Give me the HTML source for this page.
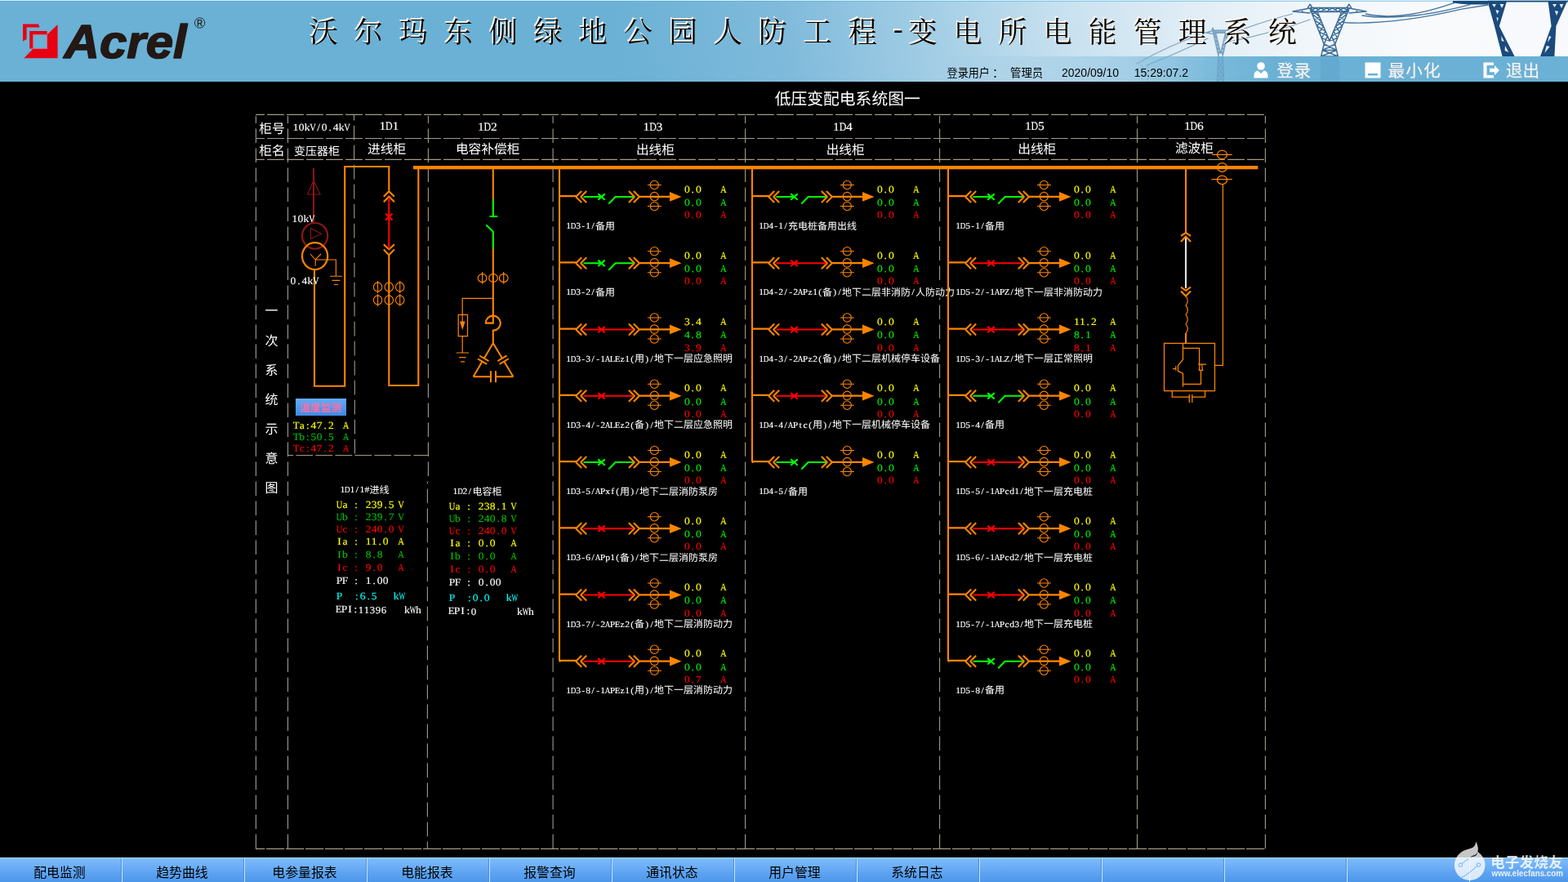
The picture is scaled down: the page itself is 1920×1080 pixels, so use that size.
<!DOCTYPE html>
<html lang="zh"><head><meta charset="utf-8"><title>沃尔玛东侧绿地公园人防工程-变电所电能管理系统</title><style>
html,body{margin:0;padding:0;background:#000}
body{position:relative;width:1920px;height:1080px;overflow:hidden;font-family:"Liberation Sans",sans-serif}
#hd{position:absolute;left:0;top:0;width:1920px;height:100px;background:linear-gradient(80deg,#6AB1D5 0,#6AB1D5 39%,#7FBADB 50%,#A5CFE6 60%,#C8E1F0 68%,#E0EDF6 76%,#F0F6FA 83%,#F8FAFC 90%,#F7F9FC 100%)}
#dg,#hd svg,#ft svg{will-change:transform}
#dg{position:absolute;left:0;top:0}
#dg text{font-family:"Liberation Serif","Noto Sans CJK SC",serif;stroke-width:.12px;text-rendering:geometricPrecision}
#ft{position:absolute;left:0;top:1050px;width:1920px;height:30px;background:#5CA3F0}
.fb{position:absolute;top:0;height:30px;background:linear-gradient(180deg,#7EBBFB 0,#6FB0F7 30%,#5CA2F1 65%,#4D97EA 100%);border-top:1px solid #A8E4FF;border-right:1px solid #C4E6FF;box-sizing:content-box;height:29px;box-shadow:inset -1px 0 0 #4A8FDE}
.cj{font-family:"Liberation Sans","Noto Sans CJK SC",sans-serif}
.ts{font-family:"Liberation Serif","Noto Serif CJK SC",serif}
</style></head>
<body>
<div id="hd"><svg width="1920" height="100" viewBox="0 0 1920 100" style="position:absolute;left:0;top:0" font-family="'Liberation Sans',sans-serif"><defs><linearGradient id="band" x1="0" x2="1"><stop offset="0" stop-color="#6AB1D5" stop-opacity="0"/><stop offset="0.12" stop-color="#6AB1D5" stop-opacity="0.1"/><stop offset="0.30" stop-color="#6AB1D5" stop-opacity="0.45"/><stop offset="0.43" stop-color="#6AB1D5" stop-opacity="0.85"/><stop offset="0.53" stop-color="#6AB1D5" stop-opacity="1"/><stop offset="1" stop-color="#6AB1D5"/></linearGradient></defs><rect x="0" y="0" width="1920" height="1" fill="#CDF3FF"/><rect x="0" y="1" width="1920" height="1" fill="#5FA8D0" opacity="0.55"/><g fill="none" stroke-linecap="round"><path d="M1582.5 17Q1540 28 1512 40M1604 24Q1560 40 1500 52M1476 40Q1430 56 1392 78M1479 47Q1440 66 1404 80" stroke="#6F97B7" stroke-width="1.2" opacity="0.85"/><path d="M1672.5 17Q1715 26.6 1781 3.4M1645 27.6Q1705 31 1790 11.2L1822 6M1668 19Q1720 27 1800 5.6" stroke="#44749E" stroke-width="1.3"/></g><path d="M1483.92 37.06L1485.06 34L1486.2 37.06M1486.01 37.06L1476.6 40.12L1485.06 41.48M1481.24 38.08L1481.24 41.14M1484.87 37.06L1491.9 68M1488.69 40.46L1494.6 65.28M1484.87 37.06L1489.67 44.6M1488.69 40.46L1486.04 42.22M1486.04 42.22L1490.66 48.73M1489.67 44.6L1487.21 47.37M1487.21 47.37L1491.64 52.87M1490.66 48.73L1488.38 52.53M1488.38 52.53L1492.63 57.01M1491.64 52.87L1489.56 57.69M1489.56 57.69L1493.61 61.14M1492.63 57.01L1490.73 62.84M1490.73 62.84L1494.6 65.28M1493.61 61.14L1491.9 68M1505.28 37.06L1504.14 34L1503 37.06M1503.19 37.06L1512.6 40.12L1504.14 41.48M1507.96 38.08L1507.96 41.14M1504.33 37.06L1497.3 68M1500.51 40.46L1494.6 65.28M1504.33 37.06L1499.53 44.6M1500.51 40.46L1503.16 42.22M1503.16 42.22L1498.54 48.73M1499.53 44.6L1501.99 47.37M1501.99 47.37L1497.56 52.87M1498.54 48.73L1500.82 52.53M1500.82 52.53L1496.57 57.01M1497.56 52.87L1499.64 57.69M1499.64 57.69L1495.59 61.14M1496.57 57.01L1498.47 62.84M1498.47 62.84L1494.6 65.28M1495.59 61.14L1497.3 68M1485.06 37.06L1504.14 37.06M1485.06 40.46L1504.14 40.46M1485.06 37.06L1487.79 40.46M1485.06 40.46L1487.79 37.06M1487.79 37.06L1490.51 40.46M1487.79 40.46L1490.51 37.06M1490.51 37.06L1493.24 40.46M1490.51 40.46L1493.24 37.06M1493.24 37.06L1495.96 40.46M1493.24 40.46L1495.96 37.06M1495.96 37.06L1498.69 40.46M1495.96 40.46L1498.69 37.06M1498.69 37.06L1501.41 40.46M1498.69 40.46L1501.41 37.06M1501.41 37.06L1504.14 40.46M1501.41 40.46L1504.14 37.06" stroke="#8AAAC2" stroke-width="1.3" fill="none" opacity="0.85" stroke-linejoin="round"/><path d="M1601.29 9.59L1604.15 5.2L1607.01 9.59M1606.54 9.59L1583 13.98L1604.15 15.94M1594.61 11.06L1594.61 15.45M1603.67 9.59L1621.25 54M1613.21 14.47L1628 50.1M1603.67 9.59L1615.68 20.41M1613.21 14.47L1606.6 16.99M1606.6 16.99L1618.14 26.35M1615.68 20.41L1609.53 24.39M1609.53 24.39L1620.61 32.28M1618.14 26.35L1612.46 31.8M1612.46 31.8L1623.07 38.22M1620.61 32.28L1615.39 39.2M1615.39 39.2L1625.54 44.16M1623.07 38.22L1618.32 46.6M1618.32 46.6L1628 50.1M1625.54 44.16L1621.25 54M1654.71 9.59L1651.85 5.2L1648.99 9.59M1649.46 9.59L1673 13.98L1651.85 15.94M1661.39 11.06L1661.39 15.45M1652.33 9.59L1634.75 54M1642.79 14.47L1628 50.1M1652.33 9.59L1640.32 20.41M1642.79 14.47L1649.4 16.99M1649.4 16.99L1637.86 26.35M1640.32 20.41L1646.47 24.39M1646.47 24.39L1635.39 32.28M1637.86 26.35L1643.54 31.8M1643.54 31.8L1632.93 38.22M1635.39 32.28L1640.61 39.2M1640.61 39.2L1630.46 44.16M1632.93 38.22L1637.68 46.6M1637.68 46.6L1628 50.1M1630.46 44.16L1634.75 54M1604.15 9.59L1651.85 9.59M1604.15 14.47L1651.85 14.47M1604.15 9.59L1610.96 14.47M1604.15 14.47L1610.96 9.59M1610.96 9.59L1617.78 14.47M1610.96 14.47L1617.78 9.59M1617.78 9.59L1624.59 14.47M1617.78 14.47L1624.59 9.59M1624.59 9.59L1631.41 14.47M1624.59 14.47L1631.41 9.59M1631.41 9.59L1638.22 14.47M1631.41 14.47L1638.22 9.59M1638.22 9.59L1645.04 14.47M1638.22 14.47L1645.04 9.59M1645.04 9.59L1651.85 14.47M1645.04 14.47L1651.85 9.59M1621.25 54L1617.65 69M1634.75 54L1638.35 69M1621.25 54L1636.55 61.5M1634.75 54L1619.45 61.5M1619.45 61.5L1636.55 61.5M1619.45 61.5L1638.35 69M1636.55 61.5L1617.65 69M1617.65 69L1638.35 69" stroke="#3D6D98" stroke-width="1.5" fill="none" opacity="1" stroke-linejoin="round"/><path d="M1779 1H1822V5.4H1800Q1788 5 1779 3.6Z" fill="#1B4A7C"/><path d="M1822 1.6H1920" stroke="#1B4A7C" stroke-width="1.6"/><path d="M1821.5 1.5H1845L1835.8 32L1854.6 69H1839.6L1830 32Z" fill="#1B4A7C"/><path d="M1895.6 1.5H1919L1905.4 32L1903.4 69H1886L1899.6 32Z" fill="#1B4A7C"/><g fill="#E4ECF4"><path d="M1827 5H1832L1829.8 9ZM1836.5 5H1841.5L1839 10ZM1831.4 12L1835.6 13.2L1833.4 17.6ZM1832.4 21L1834.8 22L1833.6 26.4ZM1838.4 44L1842 51L1838.6 50ZM1843 56L1847.4 64L1842.6 62ZM1901 5H1906L1903.6 9ZM1909.6 5H1914.4L1912 10ZM1903.8 13L1908.2 14L1906 19ZM1896.8 44L1899.6 45L1895 52ZM1893.6 56L1897.6 57L1891.4 65Z"/></g><rect x="1150" y="69" width="770" height="31" fill="url(#band)"/><rect x="1617" y="69" width="23" height="31" fill="#3F7FAE" opacity="0.13"/><path clip-path="inset(0)" d="M1483.92 37.06L1485.06 34L1486.2 37.06M1486.01 37.06L1476.6 40.12L1485.06 41.48M1481.24 38.08L1481.24 41.14M1484.87 37.06L1491.9 68M1488.69 40.46L1494.6 65.28M1484.87 37.06L1489.67 44.6M1488.69 40.46L1486.04 42.22M1486.04 42.22L1490.66 48.73M1489.67 44.6L1487.21 47.37M1487.21 47.37L1491.64 52.87M1490.66 48.73L1488.38 52.53M1488.38 52.53L1492.63 57.01M1491.64 52.87L1489.56 57.69M1489.56 57.69L1493.61 61.14M1492.63 57.01L1490.73 62.84M1490.73 62.84L1494.6 65.28M1493.61 61.14L1491.9 68M1505.28 37.06L1504.14 34L1503 37.06M1503.19 37.06L1512.6 40.12L1504.14 41.48M1507.96 38.08L1507.96 41.14M1504.33 37.06L1497.3 68M1500.51 40.46L1494.6 65.28M1504.33 37.06L1499.53 44.6M1500.51 40.46L1503.16 42.22M1503.16 42.22L1498.54 48.73M1499.53 44.6L1501.99 47.37M1501.99 47.37L1497.56 52.87M1498.54 48.73L1500.82 52.53M1500.82 52.53L1496.57 57.01M1497.56 52.87L1499.64 57.69M1499.64 57.69L1495.59 61.14M1496.57 57.01L1498.47 62.84M1498.47 62.84L1494.6 65.28M1495.59 61.14L1497.3 68M1485.06 37.06L1504.14 37.06M1485.06 40.46L1504.14 40.46M1485.06 37.06L1487.79 40.46M1485.06 40.46L1487.79 37.06M1487.79 37.06L1490.51 40.46M1487.79 40.46L1490.51 37.06M1490.51 37.06L1493.24 40.46M1490.51 40.46L1493.24 37.06M1493.24 37.06L1495.96 40.46M1493.24 40.46L1495.96 37.06M1495.96 37.06L1498.69 40.46M1495.96 40.46L1498.69 37.06M1498.69 37.06L1501.41 40.46M1498.69 40.46L1501.41 37.06M1501.41 37.06L1504.14 40.46M1501.41 40.46L1504.14 37.06M1491.9 68L1490.46 100M1497.3 68L1498.74 100M1491.9 68L1497.66 76M1497.3 68L1491.54 76M1491.54 76L1497.66 76M1491.54 76L1498.02 84M1497.66 76L1491.18 84M1491.18 84L1498.02 84M1491.18 84L1498.38 92M1498.02 84L1490.82 92M1490.82 92L1498.38 92M1490.82 92L1498.74 100M1498.38 92L1490.46 100M1490.46 100L1498.74 100" stroke="#5A90B6" stroke-width="1.2" fill="none" opacity="0.5" stroke-linejoin="round"/><path d="M1395 78L1402 84L1409 78M1398.5 81V100M1405.5 81V100M1398.5 88L1405.5 94M1405.5 88L1398.5 94" stroke="#8FB4CC" stroke-width="1" fill="none" opacity="0.7"/><path d="M28 29.4H47L48.6 33.6H32.6V48L28 50.6Z" fill="#E60012"/><path d="M36.2 38H57.6V42.6H40.7V59.4H36.2Z" fill="#E60012"/><path d="M70.6 30V71.3H29.3L40.7 59.5H57.6V42.6Z" fill="#E60012"/><rect x="40.7" y="42.6" width="16.9" height="16.9" fill="none" stroke="#D87088" stroke-width="0.8"/><text transform="translate(78.6 71.2) scale(1.035 1)" font-size="58" font-weight="bold" font-style="italic" fill="#231815" stroke="#231815" stroke-width="1.6" stroke-linejoin="round">Acrel</text><circle cx="244.6" cy="28" r="6.2" fill="none" stroke="#2a2a2a" stroke-width="1"/><text x="244.6" y="31.6" font-size="10" font-weight="bold" text-anchor="middle" fill="#2a2a2a">R</text><g fill="#fff" transform="translate(-1.5 -1.5)"><text class="ts" y="51.62" font-size="34.8" x="379.3 434.3 489.3 544.3 599.3 654.3 709.3 764.3 819.3 874.3 929.3 984.3 1039.3 1094 1112.9 1167.9 1222.9 1277.9 1332.9 1387.9 1442.9 1497.9 1552.9">沃尔玛东侧绿地公园人防工程<tspan dy="-5">-</tspan><tspan dy="5">变</tspan>电所电能管理系统</text></g><g fill="#FFE9D0" transform="translate(-0.6 -0.6)" opacity="0.9"><text class="ts" y="51.62" font-size="34.8" x="379.3 434.3 489.3 544.3 599.3 654.3 709.3 764.3 819.3 874.3 929.3 984.3 1039.3 1094 1112.9 1167.9 1222.9 1277.9 1332.9 1387.9 1442.9 1497.9 1552.9">沃尔玛东侧绿地公园人防工程<tspan dy="-5">-</tspan><tspan dy="5">变</tspan>电所电能管理系统</text></g><g fill="#000"><text class="ts" y="51.62" font-size="34.8" x="379.3 434.3 489.3 544.3 599.3 654.3 709.3 764.3 819.3 874.3 929.3 984.3 1039.3 1094 1112.9 1167.9 1222.9 1277.9 1332.9 1387.9 1442.9 1497.9 1552.9">沃尔玛东侧绿地公园人防工程<tspan dy="-5">-</tspan><tspan dy="5">变</tspan>电所电能管理系统</text></g><text class="cj" x="1159.6" y="94.18" font-size="13.1" fill="#000">登录用户</text><text class="cj" x="1215.2" y="94.18" font-size="13.1" fill="#000">：</text><text class="cj" x="1237" y="94.29" font-size="13.4" fill="#000">管理员</text><text x="1300" y="93.8" font-size="14" fill="#000">2020/09/10</text><text x="1388.8" y="93.8" font-size="14" fill="#000">15:29:07.2</text><g fill="#fff"><circle cx="1544" cy="81" r="4.8"/><path d="M1535.5 95.5V92.5Q1535.5 87 1540.5 86.5L1544 90L1547.5 86.5Q1552.5 87 1552.5 92.5V95.5Z"/></g><text class="cj" x="1564.2 1585.4" y="94.83" font-size="20.6" fill="#9BB3C6">登录</text><text class="cj" x="1563.3 1584.5" y="93.83" font-size="20.6" fill="#F2F8FC">登录</text><path d="M1671.5 76.5H1690.5V95.5H1671.5ZM1675 90H1687V92.6H1675Z" fill="#fff" fill-rule="evenodd"/><text class="cj" x="1700.4 1722.1 1743.8" y="94.83" font-size="20.6" fill="#9BB3C6">最小化</text><text class="cj" x="1699.5 1721.2 1742.9" y="93.83" font-size="20.6" fill="#F2F8FC">最小化</text><path d="M1816.5 76.5H1829V80H1820.5V92H1829V95.5H1816.5ZM1824 83.8H1830V80L1836 86L1830 92V88.2H1824Z" fill="#fff"/><text class="cj" x="1844.6 1865.4" y="94.83" font-size="20.6" fill="#9BB3C6">退出</text><text class="cj" x="1843.7 1864.5" y="93.83" font-size="20.6" fill="#F2F8FC">退出</text></svg></div>
<svg id="dg" width="1920" height="1080" viewBox="0 0 1920 1080"><defs><linearGradient id="btn" x1="0" x2="0" y1="0" y2="1"><stop offset="0" stop-color="#62ADF8"/><stop offset="1" stop-color="#3C8AE4"/></linearGradient></defs><path d="M313 140.4H1548.2" stroke="#A39A88" stroke-width="1.1" stroke-dasharray="20.8 3.2" stroke-dashoffset="9.9" fill="none"/><path d="M313 169.5H1548.2" stroke="#A39A88" stroke-width="1.1" stroke-dasharray="20.8 3.2" stroke-dashoffset="9.9" fill="none"/><path d="M313 195.4H1548.2" stroke="#A39A88" stroke-width="1.1" stroke-dasharray="20.8 3.2" stroke-dashoffset="9.9" fill="none"/><path d="M313 1039.4H1549.5" stroke="#A39A88" stroke-width="1.1" stroke-dasharray="22.3 1.7" stroke-dashoffset="11" fill="none"/><path d="M352.4 557.5H524.5" stroke="#A39A88" stroke-width="1.1" stroke-dasharray="20.8 3.2" stroke-dashoffset="14" fill="none"/><path d="M313.4 142V1039.2" stroke="#A39A88" stroke-width="1.1" stroke-dasharray="17.6 6.4" stroke-dashoffset="8.6" fill="none"/><path d="M352.5 142V1039.2" stroke="#A39A88" stroke-width="1.1" stroke-dasharray="17.6 6.4" stroke-dashoffset="8.6" fill="none"/><path d="M677.1 142V1039.2" stroke="#A39A88" stroke-width="1.1" stroke-dasharray="17.6 6.4" stroke-dashoffset="8.6" fill="none"/><path d="M912.6 142V1039.2" stroke="#A39A88" stroke-width="1.1" stroke-dasharray="17.6 6.4" stroke-dashoffset="8.6" fill="none"/><path d="M1150.6 142V1039.2" stroke="#A39A88" stroke-width="1.1" stroke-dasharray="17.6 6.4" stroke-dashoffset="8.6" fill="none"/><path d="M1392.5 142V1039.2" stroke="#A39A88" stroke-width="1.1" stroke-dasharray="17.6 6.4" stroke-dashoffset="8.6" fill="none"/><path d="M1549.4 142V1039.2" stroke="#A39A88" stroke-width="1.1" stroke-dasharray="17.6 6.4" stroke-dashoffset="8.6" fill="none"/><path d="M524.4 142V590" stroke="#A39A88" stroke-width="1.1" stroke-dasharray="17.6 6.4" stroke-dashoffset="8.6" fill="none"/><path d="M523.4 590V1039.2" stroke="#A39A88" stroke-width="1.1" stroke-dasharray="17.6 6.4" stroke-dashoffset="15.4" fill="none"/><path d="M433.5 140.7L434.5 557.5" stroke="#A39A88" stroke-width="1.1" stroke-dasharray="17.6 6.4" stroke-dashoffset="10.9" fill="none"/><text x="948.7" y="127.52" font-size="19.8" fill="#fff">低压变配电系统图一</text><text x="317.3" y="162.97" font-size="15.7" fill="#fff">柜号</text><text x="317.3" y="189.97" font-size="15.7" fill="#fff">柜名</text><g fill="#fff" stroke="#fff"><title>10kV/0.4kV</title><text transform="scale(1.08 1)" x="332.13 338.61 345.09 359.45 364.54 372.59 377.5 383.98" y="159.95" font-size="12.6">10k/0.4k</text><text transform="translate(383.1 159.95) scale(0.84 1)" text-anchor="middle" font-size="12.6">V</text><text transform="translate(425.1 159.95) scale(0.84 1)" text-anchor="middle" font-size="12.6">V</text></g><text x="360" y="189.82" font-size="14" fill="#fff">变压器柜</text><g fill="#fff" stroke="#fff"><title>1D1</title><text transform="scale(1.08 1)" x="430.01 444.83" y="159.48" font-size="14.4">11</text><text transform="translate(476.3 159.48) scale(0.83 1)" text-anchor="middle" font-size="14.4">D</text></g><g fill="#fff" stroke="#fff"><title>1D2</title><text transform="scale(1.08 1)" x="541.59 556.4" y="160.48" font-size="14.4">12</text><text transform="translate(596.8 160.48) scale(0.83 1)" text-anchor="middle" font-size="14.4">D</text></g><g fill="#fff" stroke="#fff"><title>1D3</title><text transform="scale(1.08 1)" x="729.27 744.09" y="160.18" font-size="14.4">13</text><text transform="translate(799.5 160.18) scale(0.83 1)" text-anchor="middle" font-size="14.4">D</text></g><g fill="#fff" stroke="#fff"><title>1D4</title><text transform="scale(1.08 1)" x="944.55 959.36" y="159.68" font-size="14.4">14</text><text transform="translate(1032 159.68) scale(0.83 1)" text-anchor="middle" font-size="14.4">D</text></g><g fill="#fff" stroke="#fff"><title>1D5</title><text transform="scale(1.08 1)" x="1161.96 1176.77" y="158.58" font-size="14.4">15</text><text transform="translate(1266.8 158.58) scale(0.83 1)" text-anchor="middle" font-size="14.4">D</text></g><g fill="#fff" stroke="#fff"><title>1D6</title><text transform="scale(1.08 1)" x="1342.51 1357.33" y="158.58" font-size="14.4">16</text><text transform="translate(1461.8 158.58) scale(0.83 1)" text-anchor="middle" font-size="14.4">D</text></g><text x="450.05" y="187.97" font-size="15.7" fill="#fff">进线柜</text><text x="557.95" y="187.97" font-size="15.7" fill="#fff">电容补偿柜</text><text x="778.95" y="189.37" font-size="15.7" fill="#fff">出线柜</text><text x="1011.65" y="189.37" font-size="15.7" fill="#fff">出线柜</text><text x="1246.25" y="188.17" font-size="15.7" fill="#fff">出线柜</text><text x="1438.95" y="187.17" font-size="15.7" fill="#fff">滤波柜</text><text x="324.6" y="386.48" font-size="16" fill="#fff">一</text><text x="324.6" y="422.63" font-size="16" fill="#fff">次</text><text x="324.6" y="458.78" font-size="16" fill="#fff">系</text><text x="324.6" y="494.93" font-size="16" fill="#fff">统</text><text x="324.6" y="531.08" font-size="16" fill="#fff">示</text><text x="324.6" y="567.23" font-size="16" fill="#fff">意</text><text x="324.6" y="603.38" font-size="16" fill="#fff">图</text><path d="M506 205.1H1540.3" stroke="#FF8500" stroke-width="4.2" fill="none"/><path d="M384 206L384 273" stroke="#8E1515" stroke-width="2.1" fill="none"/><path d="M384 221L376.6 238L392 238Z" stroke="#8E1515" stroke-width="1.1" fill="none"/><path d="M370 288.8a15.6 15.8 0 1 0 31.2 0a15.6 15.8 0 1 0 -31.2 0" stroke="#8E1515" stroke-width="2.2" fill="none"/><path d="M380.5 279.5L380.5 292.5L393.5 286.3Z" stroke="#8E1515" stroke-width="1.1" fill="none"/><path d="M370 313.6a15.6 16.4 0 1 0 31.2 0a15.6 16.4 0 1 0 -31.2 0" stroke="#FF8500" stroke-width="2.2" fill="none"/><path d="M380 311L386.2 318L393 311M386.2 318L386.2 325.8M386.2 318L411.4 318L411.4 338.3M404 338.3L419 338.3M406.6 343.4L416.4 343.4M409 348.5L414 348.5" stroke="#FF8500" stroke-width="1.1" fill="none"/><path d="M385 330L385 472.7L422.2 472.7L422.2 204L476.3 204L476.3 233.5" stroke="#FF8500" stroke-width="2.1" fill="none" stroke-linejoin="miter"/><g fill="#fff" stroke="#fff"><title>10kV</title><text transform="scale(1.08 1)" x="331.02 337.5 343.98" y="271.95" font-size="12.6">10k</text><text transform="translate(381.9 271.95) scale(0.84 1)" text-anchor="middle" font-size="12.6">V</text></g><g fill="#fff" stroke="#fff"><title>0.4kV</title><text transform="scale(1.08 1)" x="329.16 337.22 342.13 348.61" y="348.05" font-size="12.6">0.4k</text><text transform="translate(386.9 348.05) scale(0.84 1)" text-anchor="middle" font-size="12.6">V</text></g><path d="M469.8 240.8L476.3 234.2L482.9 240.8M469.8 247.2L476.3 240.8L482.9 247.2M469.8 299.2L476.3 305.4L482.9 299.2M469.8 305.6L476.3 312.2L482.9 305.6M476.3 312L476.3 472L512.3 472L512.3 206" stroke="#FF8500" stroke-width="2.1" fill="none"/><path d="M476.3 242L476.3 304.5M472 261.6L480.6 269.6M472 269.6L480.6 261.6" stroke="#FF0000" stroke-width="2.1" fill="none"/><path d="M457.4 351.5a5.2 5.6 0 1 0 10.4 0a5.2 5.6 0 1 0 -10.4 0M462.6 343.9L462.6 359.1M471.1 351.5a5.2 5.6 0 1 0 10.4 0a5.2 5.6 0 1 0 -10.4 0M484.5 351.5a5.2 5.6 0 1 0 10.4 0a5.2 5.6 0 1 0 -10.4 0M489.7 343.9L489.7 359.1M457.4 367.5a5.2 5.6 0 1 0 10.4 0a5.2 5.6 0 1 0 -10.4 0M462.6 359.9L462.6 375.1M471.1 367.5a5.2 5.6 0 1 0 10.4 0a5.2 5.6 0 1 0 -10.4 0M484.5 367.5a5.2 5.6 0 1 0 10.4 0a5.2 5.6 0 1 0 -10.4 0M489.7 359.9L489.7 375.1" stroke="#FF8500" stroke-width="1.1" fill="none"/><rect x="362" y="488" width="62" height="21" fill="url(#btn)"/><text x="367.2" y="503.66" font-size="12.8" font-weight="bold" fill="#FF6FA5">温度监测</text><g fill="#FFFF00" stroke="#FFFF00"><title>Ta:47.2</title><text transform="scale(1.08 1)" x="339.54 347.21 352.43 359.05 367.24 372.29" y="524.65" font-size="12.6">a:47.2</text><text transform="translate(362.57 524.65) scale(1.01 1)" text-anchor="middle" font-size="12.6">T</text></g><g fill="#FFFF00" stroke="#FFFF00"><title>A</title><text transform="translate(423.5 524.65) scale(0.84 1)" text-anchor="middle" font-size="12.6">A</text></g><g fill="#00C000" stroke="#00C000"><title>Tb:50.5</title><text transform="scale(1.08 1)" x="339.19 347.21 352.43 359.05 367.24 372.29" y="538.75" font-size="12.6">b:50.5</text><text transform="translate(362.57 538.75) scale(1.01 1)" text-anchor="middle" font-size="12.6">T</text></g><g fill="#00C000" stroke="#00C000"><title>A</title><text transform="translate(423.5 538.75) scale(0.84 1)" text-anchor="middle" font-size="12.6">A</text></g><g fill="#FF0000" stroke="#FF0000"><title>Tc:47.2</title><text transform="scale(1.08 1)" x="339.54 347.21 352.43 359.05 367.24 372.29" y="552.85" font-size="12.6">c:47.2</text><text transform="translate(362.57 552.85) scale(1.01 1)" text-anchor="middle" font-size="12.6">T</text></g><g fill="#FF0000" stroke="#FF0000"><title>A</title><text transform="translate(423.5 552.85) scale(0.84 1)" text-anchor="middle" font-size="12.6">A</text></g><g fill="#fff" stroke="#fff"><title>1D1/1#进线</title><text x="452.4" y="603.73" font-size="12" stroke="none">进线</text><text transform="scale(1.08 1)" x="385.63 396.74 403.5 407.86 413.41" y="603.13" font-size="10.8">11/1#</text><text transform="translate(425.4 603.13) scale(0.85 1)" text-anchor="middle" font-size="10.8">D</text></g><g fill="#FFFF00" stroke="#FFFF00"><title>Ua</title><text transform="scale(1.08 1)" x="388.41" y="622.15" font-size="12.6">a</text><text transform="translate(415.5 622.15) scale(0.84 1)" text-anchor="middle" font-size="12.6">U</text></g><g fill="#FFFF00" stroke="#FFFF00"><title>:</title><text transform="scale(1.08 1)" x="402.05" y="622.15" font-size="12.6">:</text></g><g fill="#FFFF00" stroke="#FFFF00"><title>239.5</title><text transform="scale(1.08 1)" x="414.54 421.02 427.5 435.55 440.46" y="622.15" font-size="12.6">239.5</text></g><g fill="#FFFF00" stroke="#FFFF00"><title>V</title><text transform="translate(491 622.15) scale(0.84 1)" text-anchor="middle" font-size="12.6">V</text></g><g fill="#00C000" stroke="#00C000"><title>Ub</title><text transform="scale(1.08 1)" x="388.05" y="637.15" font-size="12.6">b</text><text transform="translate(415.5 637.15) scale(0.84 1)" text-anchor="middle" font-size="12.6">U</text></g><g fill="#00C000" stroke="#00C000"><title>:</title><text transform="scale(1.08 1)" x="402.05" y="637.15" font-size="12.6">:</text></g><g fill="#00C000" stroke="#00C000"><title>239.7</title><text transform="scale(1.08 1)" x="414.54 421.02 427.5 435.55 440.46" y="637.15" font-size="12.6">239.7</text></g><g fill="#00C000" stroke="#00C000"><title>V</title><text transform="translate(491 637.15) scale(0.84 1)" text-anchor="middle" font-size="12.6">V</text></g><g fill="#FF0000" stroke="#FF0000"><title>Uc</title><text transform="scale(1.08 1)" x="388.41" y="652.05" font-size="12.6">c</text><text transform="translate(415.5 652.05) scale(0.84 1)" text-anchor="middle" font-size="12.6">U</text></g><g fill="#FF0000" stroke="#FF0000"><title>:</title><text transform="scale(1.08 1)" x="402.05" y="652.05" font-size="12.6">:</text></g><g fill="#FF0000" stroke="#FF0000"><title>240.0</title><text transform="scale(1.08 1)" x="414.54 421.02 427.5 435.55 440.46" y="652.05" font-size="12.6">240.0</text></g><g fill="#FF0000" stroke="#FF0000"><title>V</title><text transform="translate(491 652.05) scale(0.84 1)" text-anchor="middle" font-size="12.6">V</text></g><g fill="#FFFF00" stroke="#FFFF00"><title>Ia</title><text transform="scale(1.08 1)" x="382.62 388.41" y="667.05" font-size="12.6">Ia</text></g><g fill="#FFFF00" stroke="#FFFF00"><title>:</title><text transform="scale(1.08 1)" x="402.05" y="667.05" font-size="12.6">:</text></g><g fill="#FFFF00" stroke="#FFFF00"><title>11.0</title><text transform="scale(1.08 1)" x="414.54 421.02 429.07 433.98" y="667.05" font-size="12.6">11.0</text></g><g fill="#FFFF00" stroke="#FFFF00"><title>A</title><text transform="translate(491 667.05) scale(0.84 1)" text-anchor="middle" font-size="12.6">A</text></g><g fill="#00C000" stroke="#00C000"><title>Ib</title><text transform="scale(1.08 1)" x="382.62 388.05" y="682.85" font-size="12.6">Ib</text></g><g fill="#00C000" stroke="#00C000"><title>:</title><text transform="scale(1.08 1)" x="402.05" y="682.85" font-size="12.6">:</text></g><g fill="#00C000" stroke="#00C000"><title>8.8</title><text transform="scale(1.08 1)" x="414.54 422.59 427.5" y="682.85" font-size="12.6">8.8</text></g><g fill="#00C000" stroke="#00C000"><title>A</title><text transform="translate(491 682.85) scale(0.84 1)" text-anchor="middle" font-size="12.6">A</text></g><g fill="#FF0000" stroke="#FF0000"><title>Ic</title><text transform="scale(1.08 1)" x="382.62 388.41" y="699.05" font-size="12.6">Ic</text></g><g fill="#FF0000" stroke="#FF0000"><title>:</title><text transform="scale(1.08 1)" x="402.05" y="699.05" font-size="12.6">:</text></g><g fill="#FF0000" stroke="#FF0000"><title>9.0</title><text transform="scale(1.08 1)" x="414.54 422.59 427.5" y="699.05" font-size="12.6">9.0</text></g><g fill="#FF0000" stroke="#FF0000"><title>A</title><text transform="translate(491 699.05) scale(0.84 1)" text-anchor="middle" font-size="12.6">A</text></g><g fill="#fff" stroke="#fff"><title>PF</title><text transform="scale(1.08 1)" x="381.22 387.7" y="715.45" font-size="12.6">PF</text></g><g fill="#fff" stroke="#fff"><title>:</title><text transform="scale(1.08 1)" x="402.05" y="715.45" font-size="12.6">:</text></g><g fill="#fff" stroke="#fff"><title>1.00</title><text transform="scale(1.08 1)" x="414.54 422.59 427.5 433.98" y="715.45" font-size="12.6">1.00</text></g><g fill="#00FFFF" stroke="#00FFFF"><title>P</title><text transform="scale(1.08 1)" x="381.22" y="733.95" font-size="12.6">P</text></g><g fill="#00FFFF" stroke="#00FFFF"><title>:</title><text transform="scale(1.08 1)" x="402.79" y="733.95" font-size="12.6">:</text></g><g fill="#00FFFF" stroke="#00FFFF"><title>6.5</title><text transform="scale(1.08 1)" x="408.05 416.11 421.02" y="733.95" font-size="12.6">6.5</text></g><g fill="#00FFFF" stroke="#00FFFF"><title>kW</title><text transform="scale(1.08 1)" x="446.11" y="733.95" font-size="12.6">k</text><text transform="translate(492.2 733.95) scale(0.64 1)" text-anchor="middle" font-size="12.6">W</text></g><g fill="#fff" stroke="#fff"><title>EPI:</title><text transform="scale(1.08 1)" x="386.77 394.66 401.49" y="749.85" font-size="12.6">PI:</text><text transform="translate(414.5 749.85) scale(0.99 1)" text-anchor="middle" font-size="12.6">E</text></g><g fill="#fff" stroke="#fff"><title>11396</title><text transform="scale(1.08 1)" x="406.17 412.65 419.13 425.61 432.09" y="751.25" font-size="12">11396</text></g><g fill="#fff" stroke="#fff"><title>kWh</title><text transform="scale(1.08 1)" x="458.42 471.39" y="750.65" font-size="12.6">kh</text><text transform="translate(505.5 750.65) scale(0.64 1)" text-anchor="middle" font-size="12.6">W</text></g><g fill="#fff" stroke="#fff"><title>1D2/电容柜</title><text x="578.5" y="605.83" font-size="12" stroke="none">电容柜</text><text transform="scale(1.08 1)" x="513.5 524.61 531.37" y="605.23" font-size="10.8">12/</text><text transform="translate(563.5 605.23) scale(0.85 1)" text-anchor="middle" font-size="10.8">D</text></g><g fill="#FFFF00" stroke="#FFFF00"><title>Ua</title><text transform="scale(1.08 1)" x="516.19" y="623.95" font-size="12.6">a</text><text transform="translate(553.5 623.95) scale(0.84 1)" text-anchor="middle" font-size="12.6">U</text></g><g fill="#FFFF00" stroke="#FFFF00"><title>:</title><text transform="scale(1.08 1)" x="529.82" y="623.95" font-size="12.6">:</text></g><g fill="#FFFF00" stroke="#FFFF00"><title>238.1</title><text transform="scale(1.08 1)" x="542.31 548.79 555.28 563.33 568.24" y="623.95" font-size="12.6">238.1</text></g><g fill="#FFFF00" stroke="#FFFF00"><title>V</title><text transform="translate(629 623.95) scale(0.84 1)" text-anchor="middle" font-size="12.6">V</text></g><g fill="#00C000" stroke="#00C000"><title>Ub</title><text transform="scale(1.08 1)" x="515.83" y="638.85" font-size="12.6">b</text><text transform="translate(553.5 638.85) scale(0.84 1)" text-anchor="middle" font-size="12.6">U</text></g><g fill="#00C000" stroke="#00C000"><title>:</title><text transform="scale(1.08 1)" x="529.82" y="638.85" font-size="12.6">:</text></g><g fill="#00C000" stroke="#00C000"><title>240.8</title><text transform="scale(1.08 1)" x="542.31 548.79 555.28 563.33 568.24" y="638.85" font-size="12.6">240.8</text></g><g fill="#00C000" stroke="#00C000"><title>V</title><text transform="translate(629 638.85) scale(0.84 1)" text-anchor="middle" font-size="12.6">V</text></g><g fill="#FF0000" stroke="#FF0000"><title>Uc</title><text transform="scale(1.08 1)" x="516.19" y="653.85" font-size="12.6">c</text><text transform="translate(553.5 653.85) scale(0.84 1)" text-anchor="middle" font-size="12.6">U</text></g><g fill="#FF0000" stroke="#FF0000"><title>:</title><text transform="scale(1.08 1)" x="529.82" y="653.85" font-size="12.6">:</text></g><g fill="#FF0000" stroke="#FF0000"><title>240.0</title><text transform="scale(1.08 1)" x="542.31 548.79 555.28 563.33 568.24" y="653.85" font-size="12.6">240.0</text></g><g fill="#FF0000" stroke="#FF0000"><title>V</title><text transform="translate(629 653.85) scale(0.84 1)" text-anchor="middle" font-size="12.6">V</text></g><g fill="#FFFF00" stroke="#FFFF00"><title>Ia</title><text transform="scale(1.08 1)" x="510.4 516.19" y="669.15" font-size="12.6">Ia</text></g><g fill="#FFFF00" stroke="#FFFF00"><title>:</title><text transform="scale(1.08 1)" x="529.82" y="669.15" font-size="12.6">:</text></g><g fill="#FFFF00" stroke="#FFFF00"><title>0.0</title><text transform="scale(1.08 1)" x="542.31 550.37 555.28" y="669.15" font-size="12.6">0.0</text></g><g fill="#FFFF00" stroke="#FFFF00"><title>A</title><text transform="translate(629 669.15) scale(0.84 1)" text-anchor="middle" font-size="12.6">A</text></g><g fill="#00C000" stroke="#00C000"><title>Ib</title><text transform="scale(1.08 1)" x="510.4 515.83" y="684.95" font-size="12.6">Ib</text></g><g fill="#00C000" stroke="#00C000"><title>:</title><text transform="scale(1.08 1)" x="529.82" y="684.95" font-size="12.6">:</text></g><g fill="#00C000" stroke="#00C000"><title>0.0</title><text transform="scale(1.08 1)" x="542.31 550.37 555.28" y="684.95" font-size="12.6">0.0</text></g><g fill="#00C000" stroke="#00C000"><title>A</title><text transform="translate(629 684.95) scale(0.84 1)" text-anchor="middle" font-size="12.6">A</text></g><g fill="#FF0000" stroke="#FF0000"><title>Ic</title><text transform="scale(1.08 1)" x="510.4 516.19" y="701.05" font-size="12.6">Ic</text></g><g fill="#FF0000" stroke="#FF0000"><title>:</title><text transform="scale(1.08 1)" x="529.82" y="701.05" font-size="12.6">:</text></g><g fill="#FF0000" stroke="#FF0000"><title>0.0</title><text transform="scale(1.08 1)" x="542.31 550.37 555.28" y="701.05" font-size="12.6">0.0</text></g><g fill="#FF0000" stroke="#FF0000"><title>A</title><text transform="translate(629 701.05) scale(0.84 1)" text-anchor="middle" font-size="12.6">A</text></g><g fill="#fff" stroke="#fff"><title>PF</title><text transform="scale(1.08 1)" x="509 515.48" y="717.25" font-size="12.6">PF</text></g><g fill="#fff" stroke="#fff"><title>:</title><text transform="scale(1.08 1)" x="529.82" y="717.25" font-size="12.6">:</text></g><g fill="#fff" stroke="#fff"><title>0.00</title><text transform="scale(1.08 1)" x="542.31 550.37 555.28 561.76" y="717.25" font-size="12.6">0.00</text></g><g fill="#00FFFF" stroke="#00FFFF"><title>P</title><text transform="scale(1.08 1)" x="509" y="735.65" font-size="12.6">P</text></g><g fill="#00FFFF" stroke="#00FFFF"><title>:</title><text transform="scale(1.08 1)" x="530.56" y="735.65" font-size="12.6">:</text></g><g fill="#00FFFF" stroke="#00FFFF"><title>0.0</title><text transform="scale(1.08 1)" x="535.83 543.89 548.79" y="735.65" font-size="12.6">0.0</text></g><g fill="#00FFFF" stroke="#00FFFF"><title>kW</title><text transform="scale(1.08 1)" x="573.89" y="735.65" font-size="12.6">k</text><text transform="translate(630.2 735.65) scale(0.64 1)" text-anchor="middle" font-size="12.6">W</text></g><g fill="#fff" stroke="#fff"><title>EPI:</title><text transform="scale(1.08 1)" x="514.55 522.44 529.27" y="751.95" font-size="12.6">PI:</text><text transform="translate(552.5 751.95) scale(0.99 1)" text-anchor="middle" font-size="12.6">E</text></g><g fill="#fff" stroke="#fff"><title>0</title><text transform="scale(1.08 1)" x="533.94" y="753.35" font-size="12">0</text></g><g fill="#fff" stroke="#fff"><title>kWh</title><text transform="scale(1.08 1)" x="586.2 599.16" y="752.75" font-size="12.6">kh</text><text transform="translate(643.5 752.75) scale(0.64 1)" text-anchor="middle" font-size="12.6">W</text></g><path d="M603.8 207L603.8 244.5M603.8 304L603.8 386.6" stroke="#FF8500" stroke-width="2.1" fill="none"/><path d="M603.8 244L603.8 265M599.6 265L609.2 265M595.3 275.6L603.8 283.6L603.8 304.4" stroke="#00FF00" stroke-width="2.1" fill="none"/><path d="M585.3 340.4a5.3 5 0 1 0 10.6 0a5.3 5 0 1 0 -10.6 0M590.6 333L590.6 347.8M598.7 340.4a5.3 5 0 1 0 10.6 0a5.3 5 0 1 0 -10.6 0M611.4 340.4a5.3 5 0 1 0 10.6 0a5.3 5 0 1 0 -10.6 0M616.7 333L616.7 347.8M603.8 365.4L566.2 365.4L566.2 385.3M566.2 411.6L566.2 432M561.2 385.3L572.5 385.3L572.5 411.6L561.2 411.6ZM566.2 385.3L566.2 394M558.8 432L574 432M562 437.6L570.6 437.6M564 442.8L569 442.8" stroke="#FF8500" stroke-width="1.2" fill="none"/><path d="M563 393.4L569.6 393.4L566.3 404Z" fill="#FF8500"/><path d="M603.8 386.1V395.6H594.8A9 9 0 1 1 604.6 404.6H603.8V420.4" stroke="#FF8500" stroke-width="2.1" fill="none"/><path d="M603.8 420.2L592.82 438.81M590.58 442.59L579.6 461.2M598.42 442.11L587.22 435.5M596.18 445.9L584.98 439.29M603.8 420.2L614.97 438.81M617.23 442.59L628.4 461.2M620.54 435.47L609.39 442.16M622.81 439.24L611.66 445.93M579.6 461.2L601 461.2M607 461.2L628.4 461.2M601 454.2L601 468.2M607 454.2L607 468.2" stroke="#FF8500" stroke-width="2" fill="none" stroke-linecap="butt"/><path d="M685 240.1L705.5 240.1M712.2 234.1L705.2 241L712.2 247.9M718.2 234.1L711.2 241L718.2 247.9M769.9 234.1L776.9 241L769.9 247.9M775.9 234.1L782.9 241L775.9 247.9M783 240.85L822 240.85" stroke="#FF8500" stroke-width="2.1" fill="none" stroke-linejoin="bevel"/><path d="M796.2 226.5a5.1 5.2 0 1 0 10.2 0a5.1 5.2 0 1 0 -10.2 0M796.2 240.6a5.1 5.2 0 1 0 10.2 0a5.1 5.2 0 1 0 -10.2 0M796.2 252.5a5.1 5.2 0 1 0 10.2 0a5.1 5.2 0 1 0 -10.2 0M792.9 226.5L809.9 226.5M792.9 252.5L809.9 252.5" stroke="#FF8500" stroke-width="1.1" fill="none"/><path d="M732.3 237.35L740.7 244.75M732.3 244.75L740.7 237.35M714.5 241.05L736 241.05M745.3 249.55L753.6 241.05L775.5 241.05" stroke="#00FF00" stroke-width="2.1" fill="none"/><path d="M820 235.1L834.5 240.9L820 246.7Z" fill="#FF8500"/><g fill="#FFFF00" stroke="#FFFF00"><title>0.0</title><text transform="scale(1.08 1)" x="775.83 783.89 788.79" y="235.6" font-size="12.6">0.0</text></g><g fill="#FFFF00" stroke="#FFFF00"><title>A</title><text transform="translate(885.7 235.6) scale(0.84 1)" text-anchor="middle" font-size="12.6">A</text></g><g fill="#00F000" stroke="#00F000"><title>0.0</title><text transform="scale(1.08 1)" x="775.83 783.89 788.79" y="251.85" font-size="12.6">0.0</text></g><g fill="#00F000" stroke="#00F000"><title>A</title><text transform="translate(885.7 251.85) scale(0.84 1)" text-anchor="middle" font-size="12.6">A</text></g><g fill="#FF0000" stroke="#FF0000"><title>0.0</title><text transform="scale(1.08 1)" x="775.83 783.89 788.79" y="267.1" font-size="12.6">0.0</text></g><g fill="#FF0000" stroke="#FF0000"><title>A</title><text transform="translate(885.7 267.1) scale(0.84 1)" text-anchor="middle" font-size="12.6">A</text></g><rect x="693" y="268.3" width="61" height="15" fill="#000"/><g fill="#fff" stroke="#fff"><title>1D3-1/备用</title><text x="729.1" y="280.63" font-size="12" stroke="none">备用</text><text transform="scale(1.08 1)" x="641.84 652.95 659.41 664.06 670.81" y="280.03" font-size="10.8">13-1/</text><text transform="translate(702.1 280.03) scale(0.85 1)" text-anchor="middle" font-size="10.8">D</text></g><path d="M685 321.35L705.5 321.35M712.2 315.35L705.2 322.25L712.2 329.15M718.2 315.35L711.2 322.25L718.2 329.15M769.9 315.35L776.9 322.25L769.9 329.15M775.9 315.35L782.9 322.25L775.9 329.15M783 322.1L822 322.1" stroke="#FF8500" stroke-width="2.1" fill="none" stroke-linejoin="bevel"/><path d="M796.2 307.75a5.1 5.2 0 1 0 10.2 0a5.1 5.2 0 1 0 -10.2 0M796.2 321.85a5.1 5.2 0 1 0 10.2 0a5.1 5.2 0 1 0 -10.2 0M796.2 333.75a5.1 5.2 0 1 0 10.2 0a5.1 5.2 0 1 0 -10.2 0M792.9 307.75L809.9 307.75M792.9 333.75L809.9 333.75" stroke="#FF8500" stroke-width="1.1" fill="none"/><path d="M732.3 318.6L740.7 326M732.3 326L740.7 318.6M714.5 322.3L736 322.3M745.3 330.8L753.6 322.3L775.5 322.3" stroke="#00FF00" stroke-width="2.1" fill="none"/><path d="M820 316.35L834.5 322.15L820 327.95Z" fill="#FF8500"/><g fill="#FFFF00" stroke="#FFFF00"><title>0.0</title><text transform="scale(1.08 1)" x="775.83 783.89 788.79" y="316.85" font-size="12.6">0.0</text></g><g fill="#FFFF00" stroke="#FFFF00"><title>A</title><text transform="translate(885.7 316.85) scale(0.84 1)" text-anchor="middle" font-size="12.6">A</text></g><g fill="#00F000" stroke="#00F000"><title>0.0</title><text transform="scale(1.08 1)" x="775.83 783.89 788.79" y="333.1" font-size="12.6">0.0</text></g><g fill="#00F000" stroke="#00F000"><title>A</title><text transform="translate(885.7 333.1) scale(0.84 1)" text-anchor="middle" font-size="12.6">A</text></g><g fill="#FF0000" stroke="#FF0000"><title>0.0</title><text transform="scale(1.08 1)" x="775.83 783.89 788.79" y="348.35" font-size="12.6">0.0</text></g><g fill="#FF0000" stroke="#FF0000"><title>A</title><text transform="translate(885.7 348.35) scale(0.84 1)" text-anchor="middle" font-size="12.6">A</text></g><rect x="693" y="349.55" width="61" height="15" fill="#000"/><g fill="#fff" stroke="#fff"><title>1D3-2/备用</title><text x="729.1" y="361.88" font-size="12" stroke="none">备用</text><text transform="scale(1.08 1)" x="641.84 652.95 659.41 664.06 670.81" y="361.28" font-size="10.8">13-2/</text><text transform="translate(702.1 361.28) scale(0.85 1)" text-anchor="middle" font-size="10.8">D</text></g><path d="M685 402.6L705.5 402.6M712.2 396.6L705.2 403.5L712.2 410.4M718.2 396.6L711.2 403.5L718.2 410.4M769.9 396.6L776.9 403.5L769.9 410.4M775.9 396.6L782.9 403.5L775.9 410.4M783 403.35L822 403.35" stroke="#FF8500" stroke-width="2.1" fill="none" stroke-linejoin="bevel"/><path d="M796.2 389a5.1 5.2 0 1 0 10.2 0a5.1 5.2 0 1 0 -10.2 0M796.2 403.1a5.1 5.2 0 1 0 10.2 0a5.1 5.2 0 1 0 -10.2 0M796.2 415a5.1 5.2 0 1 0 10.2 0a5.1 5.2 0 1 0 -10.2 0M792.9 389L809.9 389M792.9 415L809.9 415" stroke="#FF8500" stroke-width="1.1" fill="none"/><path d="M732.3 399.85L740.7 407.25M732.3 407.25L740.7 399.85M714.5 403.55L775.5 403.55" stroke="#FF0000" stroke-width="2.1" fill="none"/><path d="M820 397.6L834.5 403.4L820 409.2Z" fill="#FF8500"/><g fill="#FFFF00" stroke="#FFFF00"><title>3.4</title><text transform="scale(1.08 1)" x="775.83 783.89 788.79" y="398.1" font-size="12.6">3.4</text></g><g fill="#FFFF00" stroke="#FFFF00"><title>A</title><text transform="translate(885.7 398.1) scale(0.84 1)" text-anchor="middle" font-size="12.6">A</text></g><g fill="#00F000" stroke="#00F000"><title>4.8</title><text transform="scale(1.08 1)" x="775.83 783.89 788.79" y="414.35" font-size="12.6">4.8</text></g><g fill="#00F000" stroke="#00F000"><title>A</title><text transform="translate(885.7 414.35) scale(0.84 1)" text-anchor="middle" font-size="12.6">A</text></g><g fill="#FF0000" stroke="#FF0000"><title>3.9</title><text transform="scale(1.08 1)" x="775.83 783.89 788.79" y="429.6" font-size="12.6">3.9</text></g><g fill="#FF0000" stroke="#FF0000"><title>A</title><text transform="translate(885.7 429.6) scale(0.84 1)" text-anchor="middle" font-size="12.6">A</text></g><rect x="693" y="430.8" width="205" height="15" fill="#000"/><g fill="#fff" stroke="#fff"><title>1D3-3/-1ALEz1(用)/地下一层应急照明</title><text x="777.1 801.1" y="443.13" font-size="12" stroke="none">用地下一层应急照明</text><text transform="scale(1.08 1)" x="641.84 652.95 659.41 664.06 670.81 676.07 680.73 703.25 708.5 714.96 731.63 737.48" y="442.53" font-size="10.8">13-3/-1z1()/</text><text transform="translate(702.1 442.53) scale(0.85 1)" text-anchor="middle" font-size="10.8">D</text><text transform="translate(744.1 442.53) scale(0.85 1)" text-anchor="middle" font-size="10.8">A</text><text transform="translate(750.1 442.53) scale(1 1)" text-anchor="middle" font-size="10.8">L</text><text transform="translate(756.1 442.53) scale(1 1)" text-anchor="middle" font-size="10.8">E</text></g><path d="M685 483.85L705.5 483.85M712.2 477.85L705.2 484.75L712.2 491.65M718.2 477.85L711.2 484.75L718.2 491.65M769.9 477.85L776.9 484.75L769.9 491.65M775.9 477.85L782.9 484.75L775.9 491.65M783 484.6L822 484.6" stroke="#FF8500" stroke-width="2.1" fill="none" stroke-linejoin="bevel"/><path d="M796.2 470.25a5.1 5.2 0 1 0 10.2 0a5.1 5.2 0 1 0 -10.2 0M796.2 484.35a5.1 5.2 0 1 0 10.2 0a5.1 5.2 0 1 0 -10.2 0M796.2 496.25a5.1 5.2 0 1 0 10.2 0a5.1 5.2 0 1 0 -10.2 0M792.9 470.25L809.9 470.25M792.9 496.25L809.9 496.25" stroke="#FF8500" stroke-width="1.1" fill="none"/><path d="M732.3 481.1L740.7 488.5M732.3 488.5L740.7 481.1M714.5 484.8L775.5 484.8" stroke="#FF0000" stroke-width="2.1" fill="none"/><path d="M820 478.85L834.5 484.65L820 490.45Z" fill="#FF8500"/><g fill="#FFFF00" stroke="#FFFF00"><title>0.0</title><text transform="scale(1.08 1)" x="775.83 783.89 788.79" y="479.35" font-size="12.6">0.0</text></g><g fill="#FFFF00" stroke="#FFFF00"><title>A</title><text transform="translate(885.7 479.35) scale(0.84 1)" text-anchor="middle" font-size="12.6">A</text></g><g fill="#00F000" stroke="#00F000"><title>0.0</title><text transform="scale(1.08 1)" x="775.83 783.89 788.79" y="495.6" font-size="12.6">0.0</text></g><g fill="#00F000" stroke="#00F000"><title>A</title><text transform="translate(885.7 495.6) scale(0.84 1)" text-anchor="middle" font-size="12.6">A</text></g><g fill="#FF0000" stroke="#FF0000"><title>0.0</title><text transform="scale(1.08 1)" x="775.83 783.89 788.79" y="510.85" font-size="12.6">0.0</text></g><g fill="#FF0000" stroke="#FF0000"><title>A</title><text transform="translate(885.7 510.85) scale(0.84 1)" text-anchor="middle" font-size="12.6">A</text></g><rect x="693" y="512.05" width="205" height="15" fill="#000"/><g fill="#fff" stroke="#fff"><title>1D3-4/-2ALEz2(备)/地下二层应急照明</title><text x="777.1 801.1" y="524.38" font-size="12" stroke="none">备地下二层应急照明</text><text transform="scale(1.08 1)" x="641.84 652.95 659.41 664.06 670.81 676.07 680.73 703.25 708.5 714.96 731.63 737.48" y="523.78" font-size="10.8">13-4/-2z2()/</text><text transform="translate(702.1 523.78) scale(0.85 1)" text-anchor="middle" font-size="10.8">D</text><text transform="translate(744.1 523.78) scale(0.85 1)" text-anchor="middle" font-size="10.8">A</text><text transform="translate(750.1 523.78) scale(1 1)" text-anchor="middle" font-size="10.8">L</text><text transform="translate(756.1 523.78) scale(1 1)" text-anchor="middle" font-size="10.8">E</text></g><path d="M685 565.1L705.5 565.1M712.2 559.1L705.2 566L712.2 572.9M718.2 559.1L711.2 566L718.2 572.9M769.9 559.1L776.9 566L769.9 572.9M775.9 559.1L782.9 566L775.9 572.9M783 565.85L822 565.85" stroke="#FF8500" stroke-width="2.1" fill="none" stroke-linejoin="bevel"/><path d="M796.2 551.5a5.1 5.2 0 1 0 10.2 0a5.1 5.2 0 1 0 -10.2 0M796.2 565.6a5.1 5.2 0 1 0 10.2 0a5.1 5.2 0 1 0 -10.2 0M796.2 577.5a5.1 5.2 0 1 0 10.2 0a5.1 5.2 0 1 0 -10.2 0M792.9 551.5L809.9 551.5M792.9 577.5L809.9 577.5" stroke="#FF8500" stroke-width="1.1" fill="none"/><path d="M732.3 562.35L740.7 569.75M732.3 569.75L740.7 562.35M714.5 566.05L736 566.05M745.3 574.55L753.6 566.05L775.5 566.05" stroke="#00FF00" stroke-width="2.1" fill="none"/><path d="M820 560.1L834.5 565.9L820 571.7Z" fill="#FF8500"/><g fill="#FFFF00" stroke="#FFFF00"><title>0.0</title><text transform="scale(1.08 1)" x="775.83 783.89 788.79" y="560.6" font-size="12.6">0.0</text></g><g fill="#FFFF00" stroke="#FFFF00"><title>A</title><text transform="translate(885.7 560.6) scale(0.84 1)" text-anchor="middle" font-size="12.6">A</text></g><g fill="#00F000" stroke="#00F000"><title>0.0</title><text transform="scale(1.08 1)" x="775.83 783.89 788.79" y="576.85" font-size="12.6">0.0</text></g><g fill="#00F000" stroke="#00F000"><title>A</title><text transform="translate(885.7 576.85) scale(0.84 1)" text-anchor="middle" font-size="12.6">A</text></g><g fill="#FF0000" stroke="#FF0000"><title>0.0</title><text transform="scale(1.08 1)" x="775.83 783.89 788.79" y="592.1" font-size="12.6">0.0</text></g><g fill="#FF0000" stroke="#FF0000"><title>A</title><text transform="translate(885.7 592.1) scale(0.84 1)" text-anchor="middle" font-size="12.6">A</text></g><rect x="693" y="593.3" width="187" height="15" fill="#000"/><g fill="#fff" stroke="#fff"><title>1D3-5/APxf(用)/地下二层消防泵房</title><text x="759.1 783.1" y="605.63" font-size="12" stroke="none">用地下二层消防泵房</text><text transform="scale(1.08 1)" x="641.84 652.95 659.41 664.06 670.81 680.42 686.28 692.74 698.29 714.96 720.81" y="605.03" font-size="10.8">13-5/Pxf()/</text><text transform="translate(702.1 605.03) scale(0.85 1)" text-anchor="middle" font-size="10.8">D</text><text transform="translate(732.1 605.03) scale(0.85 1)" text-anchor="middle" font-size="10.8">A</text></g><path d="M685 646.35L705.5 646.35M712.2 640.35L705.2 647.25L712.2 654.15M718.2 640.35L711.2 647.25L718.2 654.15M769.9 640.35L776.9 647.25L769.9 654.15M775.9 640.35L782.9 647.25L775.9 654.15M783 647.1L822 647.1" stroke="#FF8500" stroke-width="2.1" fill="none" stroke-linejoin="bevel"/><path d="M796.2 632.75a5.1 5.2 0 1 0 10.2 0a5.1 5.2 0 1 0 -10.2 0M796.2 646.85a5.1 5.2 0 1 0 10.2 0a5.1 5.2 0 1 0 -10.2 0M796.2 658.75a5.1 5.2 0 1 0 10.2 0a5.1 5.2 0 1 0 -10.2 0M792.9 632.75L809.9 632.75M792.9 658.75L809.9 658.75" stroke="#FF8500" stroke-width="1.1" fill="none"/><path d="M732.3 643.6L740.7 651M732.3 651L740.7 643.6M714.5 647.3L775.5 647.3" stroke="#FF0000" stroke-width="2.1" fill="none"/><path d="M820 641.35L834.5 647.15L820 652.95Z" fill="#FF8500"/><g fill="#FFFF00" stroke="#FFFF00"><title>0.0</title><text transform="scale(1.08 1)" x="775.83 783.89 788.79" y="641.85" font-size="12.6">0.0</text></g><g fill="#FFFF00" stroke="#FFFF00"><title>A</title><text transform="translate(885.7 641.85) scale(0.84 1)" text-anchor="middle" font-size="12.6">A</text></g><g fill="#00F000" stroke="#00F000"><title>0.0</title><text transform="scale(1.08 1)" x="775.83 783.89 788.79" y="658.1" font-size="12.6">0.0</text></g><g fill="#00F000" stroke="#00F000"><title>A</title><text transform="translate(885.7 658.1) scale(0.84 1)" text-anchor="middle" font-size="12.6">A</text></g><g fill="#FF0000" stroke="#FF0000"><title>0.0</title><text transform="scale(1.08 1)" x="775.83 783.89 788.79" y="673.35" font-size="12.6">0.0</text></g><g fill="#FF0000" stroke="#FF0000"><title>A</title><text transform="translate(885.7 673.35) scale(0.84 1)" text-anchor="middle" font-size="12.6">A</text></g><rect x="693" y="674.55" width="187" height="15" fill="#000"/><g fill="#fff" stroke="#fff"><title>1D3-6/APp1(备)/地下二层消防泵房</title><text x="759.1 783.1" y="686.88" font-size="12" stroke="none">备地下二层消防泵房</text><text transform="scale(1.08 1)" x="641.84 652.95 659.41 664.06 670.81 680.42 686.28 691.84 698.29 714.96 720.81" y="686.28" font-size="10.8">13-6/Pp1()/</text><text transform="translate(702.1 686.28) scale(0.85 1)" text-anchor="middle" font-size="10.8">D</text><text transform="translate(732.1 686.28) scale(0.85 1)" text-anchor="middle" font-size="10.8">A</text></g><path d="M685 727.6L705.5 727.6M712.2 721.6L705.2 728.5L712.2 735.4M718.2 721.6L711.2 728.5L718.2 735.4M769.9 721.6L776.9 728.5L769.9 735.4M775.9 721.6L782.9 728.5L775.9 735.4M783 728.35L822 728.35" stroke="#FF8500" stroke-width="2.1" fill="none" stroke-linejoin="bevel"/><path d="M796.2 714a5.1 5.2 0 1 0 10.2 0a5.1 5.2 0 1 0 -10.2 0M796.2 728.1a5.1 5.2 0 1 0 10.2 0a5.1 5.2 0 1 0 -10.2 0M796.2 740a5.1 5.2 0 1 0 10.2 0a5.1 5.2 0 1 0 -10.2 0M792.9 714L809.9 714M792.9 740L809.9 740" stroke="#FF8500" stroke-width="1.1" fill="none"/><path d="M732.3 724.85L740.7 732.25M732.3 732.25L740.7 724.85M714.5 728.55L775.5 728.55" stroke="#FF0000" stroke-width="2.1" fill="none"/><path d="M820 722.6L834.5 728.4L820 734.2Z" fill="#FF8500"/><g fill="#FFFF00" stroke="#FFFF00"><title>0.0</title><text transform="scale(1.08 1)" x="775.83 783.89 788.79" y="723.1" font-size="12.6">0.0</text></g><g fill="#FFFF00" stroke="#FFFF00"><title>A</title><text transform="translate(885.7 723.1) scale(0.84 1)" text-anchor="middle" font-size="12.6">A</text></g><g fill="#00F000" stroke="#00F000"><title>0.0</title><text transform="scale(1.08 1)" x="775.83 783.89 788.79" y="739.35" font-size="12.6">0.0</text></g><g fill="#00F000" stroke="#00F000"><title>A</title><text transform="translate(885.7 739.35) scale(0.84 1)" text-anchor="middle" font-size="12.6">A</text></g><g fill="#FF0000" stroke="#FF0000"><title>0.0</title><text transform="scale(1.08 1)" x="775.83 783.89 788.79" y="754.6" font-size="12.6">0.0</text></g><g fill="#FF0000" stroke="#FF0000"><title>A</title><text transform="translate(885.7 754.6) scale(0.84 1)" text-anchor="middle" font-size="12.6">A</text></g><rect x="693" y="755.8" width="205" height="15" fill="#000"/><g fill="#fff" stroke="#fff"><title>1D3-7/-2APEz2(备)/地下二层消防动力</title><text x="777.1 801.1" y="768.13" font-size="12" stroke="none">备地下二层消防动力</text><text transform="scale(1.08 1)" x="641.84 652.95 659.41 664.06 670.81 676.07 680.73 691.53 703.25 708.5 714.96 731.63 737.48" y="767.53" font-size="10.8">13-7/-2Pz2()/</text><text transform="translate(702.1 767.53) scale(0.85 1)" text-anchor="middle" font-size="10.8">D</text><text transform="translate(744.1 767.53) scale(0.85 1)" text-anchor="middle" font-size="10.8">A</text><text transform="translate(756.1 767.53) scale(1 1)" text-anchor="middle" font-size="10.8">E</text></g><path d="M685 808.85L705.5 808.85M712.2 802.85L705.2 809.75L712.2 816.65M718.2 802.85L711.2 809.75L718.2 816.65M769.9 802.85L776.9 809.75L769.9 816.65M775.9 802.85L782.9 809.75L775.9 816.65M783 809.6L822 809.6" stroke="#FF8500" stroke-width="2.1" fill="none" stroke-linejoin="bevel"/><path d="M796.2 795.25a5.1 5.2 0 1 0 10.2 0a5.1 5.2 0 1 0 -10.2 0M796.2 809.35a5.1 5.2 0 1 0 10.2 0a5.1 5.2 0 1 0 -10.2 0M796.2 821.25a5.1 5.2 0 1 0 10.2 0a5.1 5.2 0 1 0 -10.2 0M792.9 795.25L809.9 795.25M792.9 821.25L809.9 821.25" stroke="#FF8500" stroke-width="1.1" fill="none"/><path d="M732.3 806.1L740.7 813.5M732.3 813.5L740.7 806.1M714.5 809.8L775.5 809.8" stroke="#FF0000" stroke-width="2.1" fill="none"/><path d="M820 803.85L834.5 809.65L820 815.45Z" fill="#FF8500"/><g fill="#FFFF00" stroke="#FFFF00"><title>0.0</title><text transform="scale(1.08 1)" x="775.83 783.89 788.79" y="804.35" font-size="12.6">0.0</text></g><g fill="#FFFF00" stroke="#FFFF00"><title>A</title><text transform="translate(885.7 804.35) scale(0.84 1)" text-anchor="middle" font-size="12.6">A</text></g><g fill="#00F000" stroke="#00F000"><title>0.0</title><text transform="scale(1.08 1)" x="775.83 783.89 788.79" y="820.6" font-size="12.6">0.0</text></g><g fill="#00F000" stroke="#00F000"><title>A</title><text transform="translate(885.7 820.6) scale(0.84 1)" text-anchor="middle" font-size="12.6">A</text></g><g fill="#FF0000" stroke="#FF0000"><title>0.7</title><text transform="scale(1.08 1)" x="775.83 783.89 788.79" y="835.85" font-size="12.6">0.7</text></g><g fill="#FF0000" stroke="#FF0000"><title>A</title><text transform="translate(885.7 835.85) scale(0.84 1)" text-anchor="middle" font-size="12.6">A</text></g><rect x="693" y="837.05" width="205" height="15" fill="#000"/><g fill="#fff" stroke="#fff"><title>1D3-8/-1APEz1(用)/地下一层消防动力</title><text x="777.1 801.1" y="849.38" font-size="12" stroke="none">用地下一层消防动力</text><text transform="scale(1.08 1)" x="641.84 652.95 659.41 664.06 670.81 676.07 680.73 691.53 703.25 708.5 714.96 731.63 737.48" y="848.78" font-size="10.8">13-8/-1Pz1()/</text><text transform="translate(702.1 848.78) scale(0.85 1)" text-anchor="middle" font-size="10.8">D</text><text transform="translate(744.1 848.78) scale(0.85 1)" text-anchor="middle" font-size="10.8">A</text><text transform="translate(756.1 848.78) scale(1 1)" text-anchor="middle" font-size="10.8">E</text></g><path d="M921 240.1L941.5 240.1M948.2 234.1L941.2 241L948.2 247.9M954.2 234.1L947.2 241L954.2 247.9M1005.9 234.1L1012.9 241L1005.9 247.9M1011.9 234.1L1018.9 241L1011.9 247.9M1019 240.85L1058 240.85" stroke="#FF8500" stroke-width="2.1" fill="none" stroke-linejoin="bevel"/><path d="M1032.2 226.5a5.1 5.2 0 1 0 10.2 0a5.1 5.2 0 1 0 -10.2 0M1032.2 240.6a5.1 5.2 0 1 0 10.2 0a5.1 5.2 0 1 0 -10.2 0M1032.2 252.5a5.1 5.2 0 1 0 10.2 0a5.1 5.2 0 1 0 -10.2 0M1028.9 226.5L1045.9 226.5M1028.9 252.5L1045.9 252.5" stroke="#FF8500" stroke-width="1.1" fill="none"/><path d="M968.3 237.35L976.7 244.75M968.3 244.75L976.7 237.35M950.5 241.05L972 241.05M981.3 249.55L989.6 241.05L1011.5 241.05" stroke="#00FF00" stroke-width="2.1" fill="none"/><path d="M1056 235.1L1070.5 240.9L1056 246.7Z" fill="#FF8500"/><g fill="#FFFF00" stroke="#FFFF00"><title>0.0</title><text transform="scale(1.08 1)" x="994.35 1002.41 1007.31" y="235.6" font-size="12.6">0.0</text></g><g fill="#FFFF00" stroke="#FFFF00"><title>A</title><text transform="translate(1121.7 235.6) scale(0.84 1)" text-anchor="middle" font-size="12.6">A</text></g><g fill="#00F000" stroke="#00F000"><title>0.0</title><text transform="scale(1.08 1)" x="994.35 1002.41 1007.31" y="251.85" font-size="12.6">0.0</text></g><g fill="#00F000" stroke="#00F000"><title>A</title><text transform="translate(1121.7 251.85) scale(0.84 1)" text-anchor="middle" font-size="12.6">A</text></g><g fill="#FF0000" stroke="#FF0000"><title>0.0</title><text transform="scale(1.08 1)" x="994.35 1002.41 1007.31" y="267.1" font-size="12.6">0.0</text></g><g fill="#FF0000" stroke="#FF0000"><title>A</title><text transform="translate(1121.7 267.1) scale(0.84 1)" text-anchor="middle" font-size="12.6">A</text></g><rect x="929" y="268.3" width="121" height="15" fill="#000"/><g fill="#fff" stroke="#fff"><title>1D4-1/充电桩备用出线</title><text x="965.1" y="280.63" font-size="12" stroke="none">充电桩备用出线</text><text transform="scale(1.08 1)" x="860.36 871.47 877.92 882.58 889.33" y="280.03" font-size="10.8">14-1/</text><text transform="translate(938.1 280.03) scale(0.85 1)" text-anchor="middle" font-size="10.8">D</text></g><path d="M921 321.35L941.5 321.35M948.2 315.35L941.2 322.25L948.2 329.15M954.2 315.35L947.2 322.25L954.2 329.15M1005.9 315.35L1012.9 322.25L1005.9 329.15M1011.9 315.35L1018.9 322.25L1011.9 329.15M1019 322.1L1058 322.1" stroke="#FF8500" stroke-width="2.1" fill="none" stroke-linejoin="bevel"/><path d="M1032.2 307.75a5.1 5.2 0 1 0 10.2 0a5.1 5.2 0 1 0 -10.2 0M1032.2 321.85a5.1 5.2 0 1 0 10.2 0a5.1 5.2 0 1 0 -10.2 0M1032.2 333.75a5.1 5.2 0 1 0 10.2 0a5.1 5.2 0 1 0 -10.2 0M1028.9 307.75L1045.9 307.75M1028.9 333.75L1045.9 333.75" stroke="#FF8500" stroke-width="1.1" fill="none"/><path d="M968.3 318.6L976.7 326M968.3 326L976.7 318.6M950.5 322.3L1011.5 322.3" stroke="#FF0000" stroke-width="2.1" fill="none"/><path d="M1056 316.35L1070.5 322.15L1056 327.95Z" fill="#FF8500"/><g fill="#FFFF00" stroke="#FFFF00"><title>0.0</title><text transform="scale(1.08 1)" x="994.35 1002.41 1007.31" y="316.85" font-size="12.6">0.0</text></g><g fill="#FFFF00" stroke="#FFFF00"><title>A</title><text transform="translate(1121.7 316.85) scale(0.84 1)" text-anchor="middle" font-size="12.6">A</text></g><g fill="#00F000" stroke="#00F000"><title>0.0</title><text transform="scale(1.08 1)" x="994.35 1002.41 1007.31" y="333.1" font-size="12.6">0.0</text></g><g fill="#00F000" stroke="#00F000"><title>A</title><text transform="translate(1121.7 333.1) scale(0.84 1)" text-anchor="middle" font-size="12.6">A</text></g><g fill="#FF0000" stroke="#FF0000"><title>0.0</title><text transform="scale(1.08 1)" x="994.35 1002.41 1007.31" y="348.35" font-size="12.6">0.0</text></g><g fill="#FF0000" stroke="#FF0000"><title>A</title><text transform="translate(1121.7 348.35) scale(0.84 1)" text-anchor="middle" font-size="12.6">A</text></g><rect x="929" y="349.55" width="241" height="15" fill="#000"/><g fill="#fff" stroke="#fff"><title>1D4-2/-2APz1(备)/地下二层非消防/人防动力</title><text x="1007.1 1031.1 1043.1 1055.1 1067.1 1079.1 1091.1 1103.1 1121.1" y="361.88" font-size="12" stroke="none">备地下二层非消防人防动力</text><text transform="scale(1.08 1)" x="860.36 871.47 877.92 882.58 889.33 894.59 899.24 910.05 916.21 921.47 927.92 944.59 950.44 1033.78" y="361.28" font-size="10.8">14-2/-2Pz1()//</text><text transform="translate(938.1 361.28) scale(0.85 1)" text-anchor="middle" font-size="10.8">D</text><text transform="translate(980.1 361.28) scale(0.85 1)" text-anchor="middle" font-size="10.8">A</text></g><path d="M921 402.6L941.5 402.6M948.2 396.6L941.2 403.5L948.2 410.4M954.2 396.6L947.2 403.5L954.2 410.4M1005.9 396.6L1012.9 403.5L1005.9 410.4M1011.9 396.6L1018.9 403.5L1011.9 410.4M1019 403.35L1058 403.35" stroke="#FF8500" stroke-width="2.1" fill="none" stroke-linejoin="bevel"/><path d="M1032.2 389a5.1 5.2 0 1 0 10.2 0a5.1 5.2 0 1 0 -10.2 0M1032.2 403.1a5.1 5.2 0 1 0 10.2 0a5.1 5.2 0 1 0 -10.2 0M1032.2 415a5.1 5.2 0 1 0 10.2 0a5.1 5.2 0 1 0 -10.2 0M1028.9 389L1045.9 389M1028.9 415L1045.9 415" stroke="#FF8500" stroke-width="1.1" fill="none"/><path d="M968.3 399.85L976.7 407.25M968.3 407.25L976.7 399.85M950.5 403.55L1011.5 403.55" stroke="#FF0000" stroke-width="2.1" fill="none"/><path d="M1056 397.6L1070.5 403.4L1056 409.2Z" fill="#FF8500"/><g fill="#FFFF00" stroke="#FFFF00"><title>0.0</title><text transform="scale(1.08 1)" x="994.35 1002.41 1007.31" y="398.1" font-size="12.6">0.0</text></g><g fill="#FFFF00" stroke="#FFFF00"><title>A</title><text transform="translate(1121.7 398.1) scale(0.84 1)" text-anchor="middle" font-size="12.6">A</text></g><g fill="#00F000" stroke="#00F000"><title>0.0</title><text transform="scale(1.08 1)" x="994.35 1002.41 1007.31" y="414.35" font-size="12.6">0.0</text></g><g fill="#00F000" stroke="#00F000"><title>A</title><text transform="translate(1121.7 414.35) scale(0.84 1)" text-anchor="middle" font-size="12.6">A</text></g><g fill="#FF0000" stroke="#FF0000"><title>0.0</title><text transform="scale(1.08 1)" x="994.35 1002.41 1007.31" y="429.6" font-size="12.6">0.0</text></g><g fill="#FF0000" stroke="#FF0000"><title>A</title><text transform="translate(1121.7 429.6) scale(0.84 1)" text-anchor="middle" font-size="12.6">A</text></g><rect x="929" y="430.8" width="223" height="15" fill="#000"/><g fill="#fff" stroke="#fff"><title>1D4-3/-2APz2(备)/地下二层机械停车设备</title><text x="1007.1 1031.1" y="443.13" font-size="12" stroke="none">备地下二层机械停车设备</text><text transform="scale(1.08 1)" x="860.36 871.47 877.92 882.58 889.33 894.59 899.24 910.05 916.21 921.47 927.92 944.59 950.44" y="442.53" font-size="10.8">14-3/-2Pz2()/</text><text transform="translate(938.1 442.53) scale(0.85 1)" text-anchor="middle" font-size="10.8">D</text><text transform="translate(980.1 442.53) scale(0.85 1)" text-anchor="middle" font-size="10.8">A</text></g><path d="M921 483.85L941.5 483.85M948.2 477.85L941.2 484.75L948.2 491.65M954.2 477.85L947.2 484.75L954.2 491.65M1005.9 477.85L1012.9 484.75L1005.9 491.65M1011.9 477.85L1018.9 484.75L1011.9 491.65M1019 484.6L1058 484.6" stroke="#FF8500" stroke-width="2.1" fill="none" stroke-linejoin="bevel"/><path d="M1032.2 470.25a5.1 5.2 0 1 0 10.2 0a5.1 5.2 0 1 0 -10.2 0M1032.2 484.35a5.1 5.2 0 1 0 10.2 0a5.1 5.2 0 1 0 -10.2 0M1032.2 496.25a5.1 5.2 0 1 0 10.2 0a5.1 5.2 0 1 0 -10.2 0M1028.9 470.25L1045.9 470.25M1028.9 496.25L1045.9 496.25" stroke="#FF8500" stroke-width="1.1" fill="none"/><path d="M968.3 481.1L976.7 488.5M968.3 488.5L976.7 481.1M950.5 484.8L1011.5 484.8" stroke="#FF0000" stroke-width="2.1" fill="none"/><path d="M1056 478.85L1070.5 484.65L1056 490.45Z" fill="#FF8500"/><g fill="#FFFF00" stroke="#FFFF00"><title>0.0</title><text transform="scale(1.08 1)" x="994.35 1002.41 1007.31" y="479.35" font-size="12.6">0.0</text></g><g fill="#FFFF00" stroke="#FFFF00"><title>A</title><text transform="translate(1121.7 479.35) scale(0.84 1)" text-anchor="middle" font-size="12.6">A</text></g><g fill="#00F000" stroke="#00F000"><title>0.0</title><text transform="scale(1.08 1)" x="994.35 1002.41 1007.31" y="495.6" font-size="12.6">0.0</text></g><g fill="#00F000" stroke="#00F000"><title>A</title><text transform="translate(1121.7 495.6) scale(0.84 1)" text-anchor="middle" font-size="12.6">A</text></g><g fill="#FF0000" stroke="#FF0000"><title>0.0</title><text transform="scale(1.08 1)" x="994.35 1002.41 1007.31" y="510.85" font-size="12.6">0.0</text></g><g fill="#FF0000" stroke="#FF0000"><title>A</title><text transform="translate(1121.7 510.85) scale(0.84 1)" text-anchor="middle" font-size="12.6">A</text></g><rect x="929" y="512.05" width="211" height="15" fill="#000"/><g fill="#fff" stroke="#fff"><title>1D4-4/APtc(用)/地下一层机械停车设备</title><text x="995.1 1019.1" y="524.38" font-size="12" stroke="none">用地下一层机械停车设备</text><text transform="scale(1.08 1)" x="860.36 871.47 877.92 882.58 889.33 898.94 906 910.66 916.81 933.48 939.33" y="523.78" font-size="10.8">14-4/Ptc()/</text><text transform="translate(938.1 523.78) scale(0.85 1)" text-anchor="middle" font-size="10.8">D</text><text transform="translate(968.1 523.78) scale(0.85 1)" text-anchor="middle" font-size="10.8">A</text></g><path d="M921 565.1L941.5 565.1M948.2 559.1L941.2 566L948.2 572.9M954.2 559.1L947.2 566L954.2 572.9M1005.9 559.1L1012.9 566L1005.9 572.9M1011.9 559.1L1018.9 566L1011.9 572.9M1019 565.85L1058 565.85" stroke="#FF8500" stroke-width="2.1" fill="none" stroke-linejoin="bevel"/><path d="M1032.2 551.5a5.1 5.2 0 1 0 10.2 0a5.1 5.2 0 1 0 -10.2 0M1032.2 565.6a5.1 5.2 0 1 0 10.2 0a5.1 5.2 0 1 0 -10.2 0M1032.2 577.5a5.1 5.2 0 1 0 10.2 0a5.1 5.2 0 1 0 -10.2 0M1028.9 551.5L1045.9 551.5M1028.9 577.5L1045.9 577.5" stroke="#FF8500" stroke-width="1.1" fill="none"/><path d="M968.3 562.35L976.7 569.75M968.3 569.75L976.7 562.35M950.5 566.05L972 566.05M981.3 574.55L989.6 566.05L1011.5 566.05" stroke="#00FF00" stroke-width="2.1" fill="none"/><path d="M1056 560.1L1070.5 565.9L1056 571.7Z" fill="#FF8500"/><g fill="#FFFF00" stroke="#FFFF00"><title>0.0</title><text transform="scale(1.08 1)" x="994.35 1002.41 1007.31" y="560.6" font-size="12.6">0.0</text></g><g fill="#FFFF00" stroke="#FFFF00"><title>A</title><text transform="translate(1121.7 560.6) scale(0.84 1)" text-anchor="middle" font-size="12.6">A</text></g><g fill="#00F000" stroke="#00F000"><title>0.0</title><text transform="scale(1.08 1)" x="994.35 1002.41 1007.31" y="576.85" font-size="12.6">0.0</text></g><g fill="#00F000" stroke="#00F000"><title>A</title><text transform="translate(1121.7 576.85) scale(0.84 1)" text-anchor="middle" font-size="12.6">A</text></g><g fill="#FF0000" stroke="#FF0000"><title>0.0</title><text transform="scale(1.08 1)" x="994.35 1002.41 1007.31" y="592.1" font-size="12.6">0.0</text></g><g fill="#FF0000" stroke="#FF0000"><title>A</title><text transform="translate(1121.7 592.1) scale(0.84 1)" text-anchor="middle" font-size="12.6">A</text></g><rect x="929" y="593.3" width="61" height="15" fill="#000"/><g fill="#fff" stroke="#fff"><title>1D4-5/备用</title><text x="965.1" y="605.63" font-size="12" stroke="none">备用</text><text transform="scale(1.08 1)" x="860.36 871.47 877.92 882.58 889.33" y="605.03" font-size="10.8">14-5/</text><text transform="translate(938.1 605.03) scale(0.85 1)" text-anchor="middle" font-size="10.8">D</text></g><path d="M1161 240.1L1182.5 240.1M1189.2 234.1L1182.2 241L1189.2 247.9M1195.2 234.1L1188.2 241L1195.2 247.9M1246.9 234.1L1253.9 241L1246.9 247.9M1252.9 234.1L1259.9 241L1252.9 247.9M1260 240.85L1299 240.85" stroke="#FF8500" stroke-width="2.1" fill="none" stroke-linejoin="bevel"/><path d="M1273.2 226.5a5.1 5.2 0 1 0 10.2 0a5.1 5.2 0 1 0 -10.2 0M1273.2 240.6a5.1 5.2 0 1 0 10.2 0a5.1 5.2 0 1 0 -10.2 0M1273.2 252.5a5.1 5.2 0 1 0 10.2 0a5.1 5.2 0 1 0 -10.2 0M1269.9 226.5L1286.9 226.5M1269.9 252.5L1286.9 252.5" stroke="#FF8500" stroke-width="1.1" fill="none"/><path d="M1209.3 237.35L1217.7 244.75M1209.3 244.75L1217.7 237.35M1191.5 241.05L1213 241.05M1222.3 249.55L1230.6 241.05L1252.5 241.05" stroke="#00FF00" stroke-width="2.1" fill="none"/><path d="M1297 235.1L1311.5 240.9L1297 246.7Z" fill="#FF8500"/><g fill="#FFFF00" stroke="#FFFF00"><title>0.0</title><text transform="scale(1.08 1)" x="1217.5 1225.55 1230.46" y="235.6" font-size="12.6">0.0</text></g><g fill="#FFFF00" stroke="#FFFF00"><title>A</title><text transform="translate(1362.7 235.6) scale(0.84 1)" text-anchor="middle" font-size="12.6">A</text></g><g fill="#00F000" stroke="#00F000"><title>0.0</title><text transform="scale(1.08 1)" x="1217.5 1225.55 1230.46" y="251.85" font-size="12.6">0.0</text></g><g fill="#00F000" stroke="#00F000"><title>A</title><text transform="translate(1362.7 251.85) scale(0.84 1)" text-anchor="middle" font-size="12.6">A</text></g><g fill="#FF0000" stroke="#FF0000"><title>0.0</title><text transform="scale(1.08 1)" x="1217.5 1225.55 1230.46" y="267.1" font-size="12.6">0.0</text></g><g fill="#FF0000" stroke="#FF0000"><title>A</title><text transform="translate(1362.7 267.1) scale(0.84 1)" text-anchor="middle" font-size="12.6">A</text></g><rect x="1170" y="268.3" width="61" height="15" fill="#000"/><g fill="#fff" stroke="#fff"><title>1D5-1/备用</title><text x="1206.1" y="280.63" font-size="12" stroke="none">备用</text><text transform="scale(1.08 1)" x="1083.5 1094.61 1101.07 1105.73 1112.48" y="280.03" font-size="10.8">15-1/</text><text transform="translate(1179.1 280.03) scale(0.85 1)" text-anchor="middle" font-size="10.8">D</text></g><path d="M1161 321.35L1182.5 321.35M1189.2 315.35L1182.2 322.25L1189.2 329.15M1195.2 315.35L1188.2 322.25L1195.2 329.15M1246.9 315.35L1253.9 322.25L1246.9 329.15M1252.9 315.35L1259.9 322.25L1252.9 329.15M1260 322.1L1299 322.1" stroke="#FF8500" stroke-width="2.1" fill="none" stroke-linejoin="bevel"/><path d="M1273.2 307.75a5.1 5.2 0 1 0 10.2 0a5.1 5.2 0 1 0 -10.2 0M1273.2 321.85a5.1 5.2 0 1 0 10.2 0a5.1 5.2 0 1 0 -10.2 0M1273.2 333.75a5.1 5.2 0 1 0 10.2 0a5.1 5.2 0 1 0 -10.2 0M1269.9 307.75L1286.9 307.75M1269.9 333.75L1286.9 333.75" stroke="#FF8500" stroke-width="1.1" fill="none"/><path d="M1209.3 318.6L1217.7 326M1209.3 326L1217.7 318.6M1191.5 322.3L1252.5 322.3" stroke="#FF0000" stroke-width="2.1" fill="none"/><path d="M1297 316.35L1311.5 322.15L1297 327.95Z" fill="#FF8500"/><g fill="#FFFF00" stroke="#FFFF00"><title>0.0</title><text transform="scale(1.08 1)" x="1217.5 1225.55 1230.46" y="316.85" font-size="12.6">0.0</text></g><g fill="#FFFF00" stroke="#FFFF00"><title>A</title><text transform="translate(1362.7 316.85) scale(0.84 1)" text-anchor="middle" font-size="12.6">A</text></g><g fill="#00F000" stroke="#00F000"><title>0.0</title><text transform="scale(1.08 1)" x="1217.5 1225.55 1230.46" y="333.1" font-size="12.6">0.0</text></g><g fill="#00F000" stroke="#00F000"><title>A</title><text transform="translate(1362.7 333.1) scale(0.84 1)" text-anchor="middle" font-size="12.6">A</text></g><g fill="#FF0000" stroke="#FF0000"><title>0.0</title><text transform="scale(1.08 1)" x="1217.5 1225.55 1230.46" y="348.35" font-size="12.6">0.0</text></g><g fill="#FF0000" stroke="#FF0000"><title>A</title><text transform="translate(1362.7 348.35) scale(0.84 1)" text-anchor="middle" font-size="12.6">A</text></g><rect x="1170" y="349.55" width="181" height="15" fill="#000"/><g fill="#fff" stroke="#fff"><title>1D5-2/-1APZ/地下一层非消防动力</title><text x="1242.1" y="361.88" font-size="12" stroke="none">地下一层非消防动力</text><text transform="scale(1.08 1)" x="1083.5 1094.61 1101.07 1105.73 1112.48 1117.74 1122.39 1133.2 1145.81" y="361.28" font-size="10.8">15-2/-1P/</text><text transform="translate(1179.1 361.28) scale(0.85 1)" text-anchor="middle" font-size="10.8">D</text><text transform="translate(1221.1 361.28) scale(0.85 1)" text-anchor="middle" font-size="10.8">A</text><text transform="translate(1233.1 361.28) scale(1 1)" text-anchor="middle" font-size="10.8">Z</text></g><path d="M1161 402.6L1182.5 402.6M1189.2 396.6L1182.2 403.5L1189.2 410.4M1195.2 396.6L1188.2 403.5L1195.2 410.4M1246.9 396.6L1253.9 403.5L1246.9 410.4M1252.9 396.6L1259.9 403.5L1252.9 410.4M1260 403.35L1299 403.35" stroke="#FF8500" stroke-width="2.1" fill="none" stroke-linejoin="bevel"/><path d="M1273.2 389a5.1 5.2 0 1 0 10.2 0a5.1 5.2 0 1 0 -10.2 0M1273.2 403.1a5.1 5.2 0 1 0 10.2 0a5.1 5.2 0 1 0 -10.2 0M1273.2 415a5.1 5.2 0 1 0 10.2 0a5.1 5.2 0 1 0 -10.2 0M1269.9 389L1286.9 389M1269.9 415L1286.9 415" stroke="#FF8500" stroke-width="1.1" fill="none"/><path d="M1209.3 399.85L1217.7 407.25M1209.3 407.25L1217.7 399.85M1191.5 403.55L1252.5 403.55" stroke="#FF0000" stroke-width="2.1" fill="none"/><path d="M1297 397.6L1311.5 403.4L1297 409.2Z" fill="#FF8500"/><g fill="#FFFF00" stroke="#FFFF00"><title>11.2</title><text transform="scale(1.08 1)" x="1217.5 1223.98 1232.04 1236.94" y="398.1" font-size="12.6">11.2</text></g><g fill="#FFFF00" stroke="#FFFF00"><title>A</title><text transform="translate(1362.7 398.1) scale(0.84 1)" text-anchor="middle" font-size="12.6">A</text></g><g fill="#00F000" stroke="#00F000"><title>8.1</title><text transform="scale(1.08 1)" x="1217.5 1225.55 1230.46" y="414.35" font-size="12.6">8.1</text></g><g fill="#00F000" stroke="#00F000"><title>A</title><text transform="translate(1362.7 414.35) scale(0.84 1)" text-anchor="middle" font-size="12.6">A</text></g><g fill="#FF0000" stroke="#FF0000"><title>8.1</title><text transform="scale(1.08 1)" x="1217.5 1225.55 1230.46" y="429.6" font-size="12.6">8.1</text></g><g fill="#FF0000" stroke="#FF0000"><title>A</title><text transform="translate(1362.7 429.6) scale(0.84 1)" text-anchor="middle" font-size="12.6">A</text></g><rect x="1170" y="430.8" width="169" height="15" fill="#000"/><g fill="#fff" stroke="#fff"><title>1D5-3/-1ALZ/地下一层正常照明</title><text x="1242.1" y="443.13" font-size="12" stroke="none">地下一层正常照明</text><text transform="scale(1.08 1)" x="1083.5 1094.61 1101.07 1105.73 1112.48 1117.74 1122.39 1145.81" y="442.53" font-size="10.8">15-3/-1/</text><text transform="translate(1179.1 442.53) scale(0.85 1)" text-anchor="middle" font-size="10.8">D</text><text transform="translate(1221.1 442.53) scale(0.85 1)" text-anchor="middle" font-size="10.8">A</text><text transform="translate(1227.1 442.53) scale(1 1)" text-anchor="middle" font-size="10.8">L</text><text transform="translate(1233.1 442.53) scale(1 1)" text-anchor="middle" font-size="10.8">Z</text></g><path d="M1161 483.85L1182.5 483.85M1189.2 477.85L1182.2 484.75L1189.2 491.65M1195.2 477.85L1188.2 484.75L1195.2 491.65M1246.9 477.85L1253.9 484.75L1246.9 491.65M1252.9 477.85L1259.9 484.75L1252.9 491.65M1260 484.6L1299 484.6" stroke="#FF8500" stroke-width="2.1" fill="none" stroke-linejoin="bevel"/><path d="M1273.2 470.25a5.1 5.2 0 1 0 10.2 0a5.1 5.2 0 1 0 -10.2 0M1273.2 484.35a5.1 5.2 0 1 0 10.2 0a5.1 5.2 0 1 0 -10.2 0M1273.2 496.25a5.1 5.2 0 1 0 10.2 0a5.1 5.2 0 1 0 -10.2 0M1269.9 470.25L1286.9 470.25M1269.9 496.25L1286.9 496.25" stroke="#FF8500" stroke-width="1.1" fill="none"/><path d="M1209.3 481.1L1217.7 488.5M1209.3 488.5L1217.7 481.1M1191.5 484.8L1213 484.8M1222.3 493.3L1230.6 484.8L1252.5 484.8" stroke="#00FF00" stroke-width="2.1" fill="none"/><path d="M1297 478.85L1311.5 484.65L1297 490.45Z" fill="#FF8500"/><g fill="#FFFF00" stroke="#FFFF00"><title>0.0</title><text transform="scale(1.08 1)" x="1217.5 1225.55 1230.46" y="479.35" font-size="12.6">0.0</text></g><g fill="#FFFF00" stroke="#FFFF00"><title>A</title><text transform="translate(1362.7 479.35) scale(0.84 1)" text-anchor="middle" font-size="12.6">A</text></g><g fill="#00F000" stroke="#00F000"><title>0.0</title><text transform="scale(1.08 1)" x="1217.5 1225.55 1230.46" y="495.6" font-size="12.6">0.0</text></g><g fill="#00F000" stroke="#00F000"><title>A</title><text transform="translate(1362.7 495.6) scale(0.84 1)" text-anchor="middle" font-size="12.6">A</text></g><g fill="#FF0000" stroke="#FF0000"><title>0.0</title><text transform="scale(1.08 1)" x="1217.5 1225.55 1230.46" y="510.85" font-size="12.6">0.0</text></g><g fill="#FF0000" stroke="#FF0000"><title>A</title><text transform="translate(1362.7 510.85) scale(0.84 1)" text-anchor="middle" font-size="12.6">A</text></g><rect x="1170" y="512.05" width="61" height="15" fill="#000"/><g fill="#fff" stroke="#fff"><title>1D5-4/备用</title><text x="1206.1" y="524.38" font-size="12" stroke="none">备用</text><text transform="scale(1.08 1)" x="1083.5 1094.61 1101.07 1105.73 1112.48" y="523.78" font-size="10.8">15-4/</text><text transform="translate(1179.1 523.78) scale(0.85 1)" text-anchor="middle" font-size="10.8">D</text></g><path d="M1161 565.1L1182.5 565.1M1189.2 559.1L1182.2 566L1189.2 572.9M1195.2 559.1L1188.2 566L1195.2 572.9M1246.9 559.1L1253.9 566L1246.9 572.9M1252.9 559.1L1259.9 566L1252.9 572.9M1260 565.85L1299 565.85" stroke="#FF8500" stroke-width="2.1" fill="none" stroke-linejoin="bevel"/><path d="M1273.2 551.5a5.1 5.2 0 1 0 10.2 0a5.1 5.2 0 1 0 -10.2 0M1273.2 565.6a5.1 5.2 0 1 0 10.2 0a5.1 5.2 0 1 0 -10.2 0M1273.2 577.5a5.1 5.2 0 1 0 10.2 0a5.1 5.2 0 1 0 -10.2 0M1269.9 551.5L1286.9 551.5M1269.9 577.5L1286.9 577.5" stroke="#FF8500" stroke-width="1.1" fill="none"/><path d="M1209.3 562.35L1217.7 569.75M1209.3 569.75L1217.7 562.35M1191.5 566.05L1252.5 566.05" stroke="#FF0000" stroke-width="2.1" fill="none"/><path d="M1297 560.1L1311.5 565.9L1297 571.7Z" fill="#FF8500"/><g fill="#FFFF00" stroke="#FFFF00"><title>0.0</title><text transform="scale(1.08 1)" x="1217.5 1225.55 1230.46" y="560.6" font-size="12.6">0.0</text></g><g fill="#FFFF00" stroke="#FFFF00"><title>A</title><text transform="translate(1362.7 560.6) scale(0.84 1)" text-anchor="middle" font-size="12.6">A</text></g><g fill="#00F000" stroke="#00F000"><title>0.0</title><text transform="scale(1.08 1)" x="1217.5 1225.55 1230.46" y="576.85" font-size="12.6">0.0</text></g><g fill="#00F000" stroke="#00F000"><title>A</title><text transform="translate(1362.7 576.85) scale(0.84 1)" text-anchor="middle" font-size="12.6">A</text></g><g fill="#FF0000" stroke="#FF0000"><title>0.0</title><text transform="scale(1.08 1)" x="1217.5 1225.55 1230.46" y="592.1" font-size="12.6">0.0</text></g><g fill="#FF0000" stroke="#FF0000"><title>A</title><text transform="translate(1362.7 592.1) scale(0.84 1)" text-anchor="middle" font-size="12.6">A</text></g><rect x="1170" y="593.3" width="169" height="15" fill="#000"/><g fill="#fff" stroke="#fff"><title>1D5-5/-1APcd1/地下一层充电桩</title><text x="1254.1" y="605.63" font-size="12" stroke="none">地下一层充电桩</text><text transform="scale(1.08 1)" x="1083.5 1094.61 1101.07 1105.73 1112.48 1117.74 1122.39 1133.2 1139.36 1144.61 1150.17 1156.93" y="605.03" font-size="10.8">15-5/-1Pcd1/</text><text transform="translate(1179.1 605.03) scale(0.85 1)" text-anchor="middle" font-size="10.8">D</text><text transform="translate(1221.1 605.03) scale(0.85 1)" text-anchor="middle" font-size="10.8">A</text></g><path d="M1161 646.35L1182.5 646.35M1189.2 640.35L1182.2 647.25L1189.2 654.15M1195.2 640.35L1188.2 647.25L1195.2 654.15M1246.9 640.35L1253.9 647.25L1246.9 654.15M1252.9 640.35L1259.9 647.25L1252.9 654.15M1260 647.1L1299 647.1" stroke="#FF8500" stroke-width="2.1" fill="none" stroke-linejoin="bevel"/><path d="M1273.2 632.75a5.1 5.2 0 1 0 10.2 0a5.1 5.2 0 1 0 -10.2 0M1273.2 646.85a5.1 5.2 0 1 0 10.2 0a5.1 5.2 0 1 0 -10.2 0M1273.2 658.75a5.1 5.2 0 1 0 10.2 0a5.1 5.2 0 1 0 -10.2 0M1269.9 632.75L1286.9 632.75M1269.9 658.75L1286.9 658.75" stroke="#FF8500" stroke-width="1.1" fill="none"/><path d="M1209.3 643.6L1217.7 651M1209.3 651L1217.7 643.6M1191.5 647.3L1252.5 647.3" stroke="#FF0000" stroke-width="2.1" fill="none"/><path d="M1297 641.35L1311.5 647.15L1297 652.95Z" fill="#FF8500"/><g fill="#FFFF00" stroke="#FFFF00"><title>0.0</title><text transform="scale(1.08 1)" x="1217.5 1225.55 1230.46" y="641.85" font-size="12.6">0.0</text></g><g fill="#FFFF00" stroke="#FFFF00"><title>A</title><text transform="translate(1362.7 641.85) scale(0.84 1)" text-anchor="middle" font-size="12.6">A</text></g><g fill="#00F000" stroke="#00F000"><title>0.0</title><text transform="scale(1.08 1)" x="1217.5 1225.55 1230.46" y="658.1" font-size="12.6">0.0</text></g><g fill="#00F000" stroke="#00F000"><title>A</title><text transform="translate(1362.7 658.1) scale(0.84 1)" text-anchor="middle" font-size="12.6">A</text></g><g fill="#FF0000" stroke="#FF0000"><title>0.0</title><text transform="scale(1.08 1)" x="1217.5 1225.55 1230.46" y="673.35" font-size="12.6">0.0</text></g><g fill="#FF0000" stroke="#FF0000"><title>A</title><text transform="translate(1362.7 673.35) scale(0.84 1)" text-anchor="middle" font-size="12.6">A</text></g><rect x="1170" y="674.55" width="169" height="15" fill="#000"/><g fill="#fff" stroke="#fff"><title>1D5-6/-1APcd2/地下一层充电桩</title><text x="1254.1" y="686.88" font-size="12" stroke="none">地下一层充电桩</text><text transform="scale(1.08 1)" x="1083.5 1094.61 1101.07 1105.73 1112.48 1117.74 1122.39 1133.2 1139.36 1144.61 1150.17 1156.93" y="686.28" font-size="10.8">15-6/-1Pcd2/</text><text transform="translate(1179.1 686.28) scale(0.85 1)" text-anchor="middle" font-size="10.8">D</text><text transform="translate(1221.1 686.28) scale(0.85 1)" text-anchor="middle" font-size="10.8">A</text></g><path d="M1161 727.6L1182.5 727.6M1189.2 721.6L1182.2 728.5L1189.2 735.4M1195.2 721.6L1188.2 728.5L1195.2 735.4M1246.9 721.6L1253.9 728.5L1246.9 735.4M1252.9 721.6L1259.9 728.5L1252.9 735.4M1260 728.35L1299 728.35" stroke="#FF8500" stroke-width="2.1" fill="none" stroke-linejoin="bevel"/><path d="M1273.2 714a5.1 5.2 0 1 0 10.2 0a5.1 5.2 0 1 0 -10.2 0M1273.2 728.1a5.1 5.2 0 1 0 10.2 0a5.1 5.2 0 1 0 -10.2 0M1273.2 740a5.1 5.2 0 1 0 10.2 0a5.1 5.2 0 1 0 -10.2 0M1269.9 714L1286.9 714M1269.9 740L1286.9 740" stroke="#FF8500" stroke-width="1.1" fill="none"/><path d="M1209.3 724.85L1217.7 732.25M1209.3 732.25L1217.7 724.85M1191.5 728.55L1252.5 728.55" stroke="#FF0000" stroke-width="2.1" fill="none"/><path d="M1297 722.6L1311.5 728.4L1297 734.2Z" fill="#FF8500"/><g fill="#FFFF00" stroke="#FFFF00"><title>0.0</title><text transform="scale(1.08 1)" x="1217.5 1225.55 1230.46" y="723.1" font-size="12.6">0.0</text></g><g fill="#FFFF00" stroke="#FFFF00"><title>A</title><text transform="translate(1362.7 723.1) scale(0.84 1)" text-anchor="middle" font-size="12.6">A</text></g><g fill="#00F000" stroke="#00F000"><title>0.0</title><text transform="scale(1.08 1)" x="1217.5 1225.55 1230.46" y="739.35" font-size="12.6">0.0</text></g><g fill="#00F000" stroke="#00F000"><title>A</title><text transform="translate(1362.7 739.35) scale(0.84 1)" text-anchor="middle" font-size="12.6">A</text></g><g fill="#FF0000" stroke="#FF0000"><title>0.0</title><text transform="scale(1.08 1)" x="1217.5 1225.55 1230.46" y="754.6" font-size="12.6">0.0</text></g><g fill="#FF0000" stroke="#FF0000"><title>A</title><text transform="translate(1362.7 754.6) scale(0.84 1)" text-anchor="middle" font-size="12.6">A</text></g><rect x="1170" y="755.8" width="169" height="15" fill="#000"/><g fill="#fff" stroke="#fff"><title>1D5-7/-1APcd3/地下一层充电桩</title><text x="1254.1" y="768.13" font-size="12" stroke="none">地下一层充电桩</text><text transform="scale(1.08 1)" x="1083.5 1094.61 1101.07 1105.73 1112.48 1117.74 1122.39 1133.2 1139.36 1144.61 1150.17 1156.93" y="767.53" font-size="10.8">15-7/-1Pcd3/</text><text transform="translate(1179.1 767.53) scale(0.85 1)" text-anchor="middle" font-size="10.8">D</text><text transform="translate(1221.1 767.53) scale(0.85 1)" text-anchor="middle" font-size="10.8">A</text></g><path d="M1161 808.85L1182.5 808.85M1189.2 802.85L1182.2 809.75L1189.2 816.65M1195.2 802.85L1188.2 809.75L1195.2 816.65M1246.9 802.85L1253.9 809.75L1246.9 816.65M1252.9 802.85L1259.9 809.75L1252.9 816.65M1260 809.6L1299 809.6" stroke="#FF8500" stroke-width="2.1" fill="none" stroke-linejoin="bevel"/><path d="M1273.2 795.25a5.1 5.2 0 1 0 10.2 0a5.1 5.2 0 1 0 -10.2 0M1273.2 809.35a5.1 5.2 0 1 0 10.2 0a5.1 5.2 0 1 0 -10.2 0M1273.2 821.25a5.1 5.2 0 1 0 10.2 0a5.1 5.2 0 1 0 -10.2 0M1269.9 795.25L1286.9 795.25M1269.9 821.25L1286.9 821.25" stroke="#FF8500" stroke-width="1.1" fill="none"/><path d="M1209.3 806.1L1217.7 813.5M1209.3 813.5L1217.7 806.1M1191.5 809.8L1213 809.8M1222.3 818.3L1230.6 809.8L1252.5 809.8" stroke="#00FF00" stroke-width="2.1" fill="none"/><path d="M1297 803.85L1311.5 809.65L1297 815.45Z" fill="#FF8500"/><g fill="#FFFF00" stroke="#FFFF00"><title>0.0</title><text transform="scale(1.08 1)" x="1217.5 1225.55 1230.46" y="804.35" font-size="12.6">0.0</text></g><g fill="#FFFF00" stroke="#FFFF00"><title>A</title><text transform="translate(1362.7 804.35) scale(0.84 1)" text-anchor="middle" font-size="12.6">A</text></g><g fill="#00F000" stroke="#00F000"><title>0.0</title><text transform="scale(1.08 1)" x="1217.5 1225.55 1230.46" y="820.6" font-size="12.6">0.0</text></g><g fill="#00F000" stroke="#00F000"><title>A</title><text transform="translate(1362.7 820.6) scale(0.84 1)" text-anchor="middle" font-size="12.6">A</text></g><g fill="#FF0000" stroke="#FF0000"><title>0.0</title><text transform="scale(1.08 1)" x="1217.5 1225.55 1230.46" y="835.85" font-size="12.6">0.0</text></g><g fill="#FF0000" stroke="#FF0000"><title>A</title><text transform="translate(1362.7 835.85) scale(0.84 1)" text-anchor="middle" font-size="12.6">A</text></g><rect x="1170" y="837.05" width="61" height="15" fill="#000"/><g fill="#fff" stroke="#fff"><title>1D5-8/备用</title><text x="1206.1" y="849.38" font-size="12" stroke="none">备用</text><text transform="scale(1.08 1)" x="1083.5 1094.61 1101.07 1105.73 1112.48" y="848.78" font-size="10.8">15-8/</text><text transform="translate(1179.1 848.78) scale(0.85 1)" text-anchor="middle" font-size="10.8">D</text></g><path d="M685 207V808.25q0 1.5 1.5 1.5" stroke="#FF8500" stroke-width="2.1" fill="none"/><path d="M921 207V564.5q0 1.5 1.5 1.5" stroke="#FF8500" stroke-width="2.1" fill="none"/><path d="M1161 207V808.25q0 1.5 1.5 1.5" stroke="#FF8500" stroke-width="2.1" fill="none"/><path d="M1452 207L1452 285.5M1446 288.8L1452 285L1458 288.8M1446 296L1452 289.6L1458 296M1446 351.6L1452 355.8L1458 351.6M1446 356.4L1452 362.6L1458 356.4M1452 408L1452 420.3" stroke="#FF8500" stroke-width="2.1" fill="none"/><path d="M1452 291.5L1452 353" stroke="#E4E4E4" stroke-width="2.1" fill="none"/><path d="M1452 362.6q4.6 5.7 0 11.4q4.6 5.7 0 11.4q4.6 5.7 0 11.4q4.6 5.7 0 11.4" stroke="#E07010" stroke-width="1.3" fill="none"/><path d="M1490.5 189.4a6 5.3 0 1 0 12 0a6 5.3 0 1 0 -12 0M1490.5 205a6 5.3 0 1 0 12 0a6 5.3 0 1 0 -12 0M1490.5 220.3a6 5.3 0 1 0 12 0a6 5.3 0 1 0 -12 0M1484 189.4L1508.8 189.4M1483.5 219.7L1508.8 219.7M1497.4 225.5L1497.4 447.4L1487.5 447.4M1425.5 420.3L1487.5 420.3L1487.5 478.7L1425.5 478.7ZM1448.5 420.3L1448.5 440.2L1442.7 447.4M1442.5 447L1442.5 455M1442.7 454.6L1448.5 457.2L1448.5 473.8M1436 451.6L1439.8 451.6M1439.8 448.2L1439.8 453.4M1448.5 426.4L1468.6 426.4L1468.6 446.2M1467 446.2L1477 446.2M1469 446.5L1468.4 453.4L1472.6 453.4L1471.6 446.5M1470.5 453.4L1470.5 470.3L1448.5 470.3M1435.3 478.7L1435.3 486L1456.3 486M1459.8 486L1475.6 486L1475.6 478.7M1456.3 483L1456.3 493M1459.8 483L1459.8 493" stroke="#FF8500" stroke-width="1.25" fill="none"/></svg>
<div id="ft"><div class="fb" style="left:0px;width:149px"></div><div class="fb" style="left:150px;width:149px"></div><div class="fb" style="left:300px;width:149px"></div><div class="fb" style="left:450px;width:149px"></div><div class="fb" style="left:600px;width:149px"></div><div class="fb" style="left:750px;width:149px"></div><div class="fb" style="left:900px;width:149px"></div><div class="fb" style="left:1050px;width:149px"></div><div class="fb" style="left:1200px;width:149px"></div><div class="fb" style="left:1350px;width:149px"></div><div class="fb" style="left:1500px;width:149px"></div><div class="fb" style="left:1650px;width:149px"></div><div class="fb" style="left:1800px;width:129px"></div><svg width="1920" height="30" viewBox="0 1050 1920 30" style="position:absolute;left:0;top:0" font-family="'Liberation Sans',sans-serif"><text class="cj" x="41.2" y="1074.34" font-size="15.9" fill="#000">配电监测</text><text class="cj" x="191.2" y="1074.34" font-size="15.9" fill="#000">趋势曲线</text><text class="cj" x="333.25" y="1074.34" font-size="15.9" fill="#000">电参量报表</text><text class="cj" x="491.2" y="1074.34" font-size="15.9" fill="#000">电能报表</text><text class="cj" x="641.2" y="1074.34" font-size="15.9" fill="#000">报警查询</text><text class="cj" x="791.2" y="1074.34" font-size="15.9" fill="#000">通讯状态</text><text class="cj" x="941.2" y="1074.34" font-size="15.9" fill="#000">用户管理</text><text class="cj" x="1091.2" y="1074.34" font-size="15.9" fill="#000">系统日志</text></svg></div><svg width="150" height="56" viewBox="1770 1024 150 56" style="position:absolute;left:1770px;top:1024px" font-family="'Liberation Sans',sans-serif"><g fill="#fff" opacity="0.78"><circle cx="1799.7" cy="1059.2" r="18.8"/><path d="M1790 1043Q1795 1040 1801 1038.8Q1806.4 1037.4 1807.3 1030.4Q1811.4 1038 1809 1044.6L1800 1047Z"/></g><path d="M1800.2 1050Q1802.4 1047.4 1805 1047.2Q1807.6 1046.8 1809.4 1043.6Q1808.6 1047.6 1805.4 1048.4Q1802.4 1048.6 1800.2 1050Z" fill="#000" opacity="0.9"/><g fill="none" stroke="#6AACF8" stroke-width="1"><circle cx="1788.4" cy="1059.2" r="2.2"/><circle cx="1810.6" cy="1059" r="2.2"/><path d="M1790 1057.6L1798 1051.4M1808.8 1060.4L1799 1068.6Q1794 1072.6 1789.6 1074.4"/></g><text class="cj" x="1825.3 1843.05 1860.8 1878.55 1896.3" y="1061.81" font-size="17.4" font-weight="bold" fill="#fff" opacity="0.82">电子发烧友</text><text x="1826.6" y="1072.9" font-size="10.6" font-weight="bold" fill="#fff" opacity="0.85" textLength="87.4" lengthAdjust="spacingAndGlyphs">www.elecfans.com</text></svg>
</body></html>
